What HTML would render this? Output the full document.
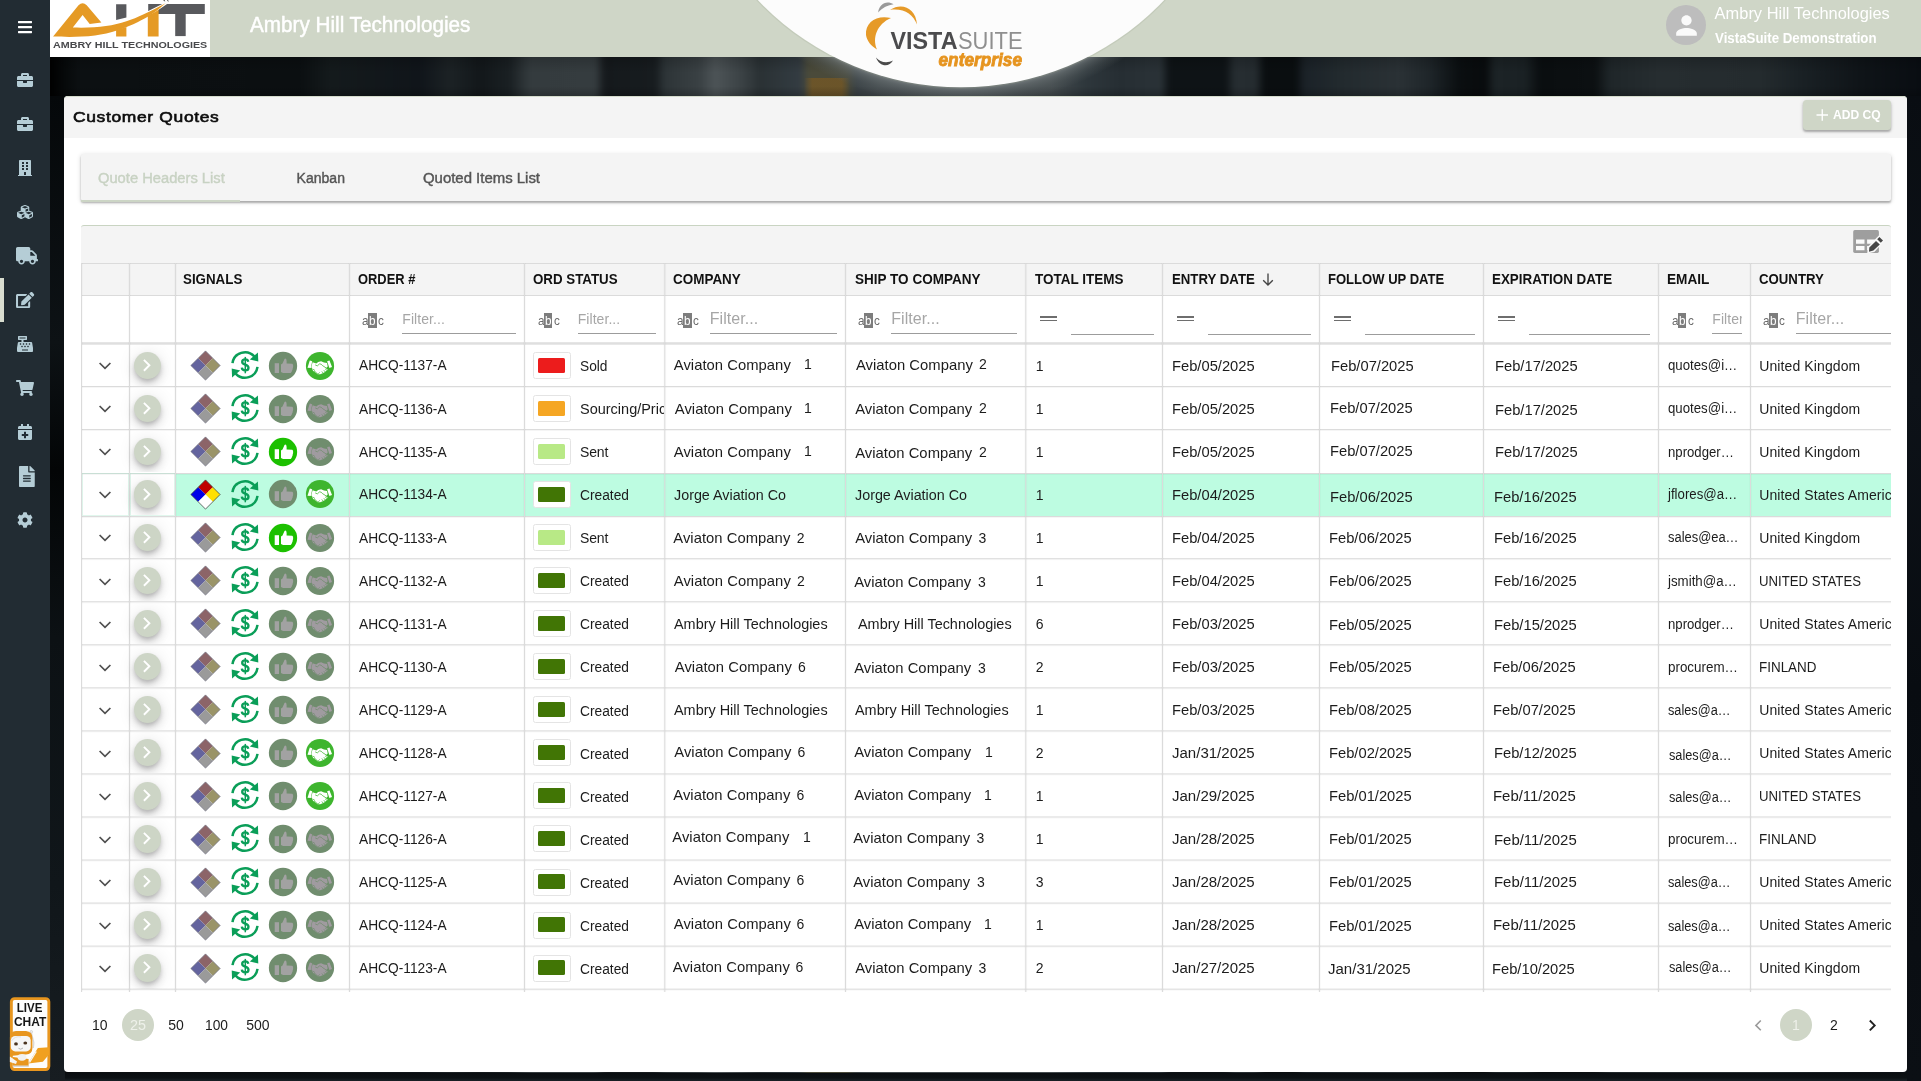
<!DOCTYPE html><html><head><meta charset="utf-8"><title>Customer Quotes</title><style>
*{box-sizing:border-box;margin:0;padding:0}
html,body{width:1921px;height:1081px;overflow:hidden;background:#0b1014}
body{font-family:"Liberation Sans",sans-serif;position:relative;color:#1a1a1a}
.abs{position:absolute}
.t{position:absolute;white-space:nowrap;line-height:1;transform-origin:0 50%}
#bg{left:-10px;top:-10px;width:1941px;height:1101px;filter:blur(2.500px);background:linear-gradient(90deg,#000000 60px,#06090a 75px,#0c1012 90px,#0b0f11 310px,#141a1c 340px,#10151a 430px,#1c2225 460px,#12171a 490px,#1a2023 520px,#343b3e 540px,#353c3f 605px,#15191c 615px,#171c1f 665px,#2d3437 675px,#3a4144 710px,#4d5457 725px,#3c4346 750px,#2a3134 770px,#333c42 810px,#4a4a3a 818px,#4a4a3a 858px,#3a4246 866px,#454c4f 890px,#454c4f 1060px,#2e373c 1095px,#262e33 1130px,#2a3237 1170px,#0e1316 1180px,#0e1316 1235px,#262d31 1245px,#252c30 1265px,#0a0e10 1275px,#0a0e10 1305px,#1b2228 1315px,#222a2e 1350px,#2a3135 1410px,#1e2529 1440px,#0a0e10 1470px,#080b0d 1495px,#1c2326 1505px,#1a2124 1535px,#0a0e10 1550px,#0c1012 1605px,#1f2629 1620px,#262d30 1670px,#242b2e 1770px,#1a2125 1810px,#0f1418 1870px,#090d12 1931px);}
#side{left:0;top:0;width:50px;height:1081px;background:#222c33}
#top{left:50px;top:0;width:1871px;height:57px;background:#cfd6c7}
#logo{left:50px;top:0;width:160px;height:57px;background:#fff}
#card{left:64.300px;top:96px;width:1842.700px;height:976px;background:#fff;border-radius:4px}
#cardhead{left:64.300px;top:96px;width:1842.700px;height:41.500px;background:#f4f4f4;border-radius:4px 4px 0 0;border-top:1.500px solid #d5dccd}
#tabs{left:81px;top:153.500px;width:1810px;height:47.500px;background:#f4f4f4;border-radius:2px;
  box-shadow:0 2px 2px rgba(0,0,0,.26),0 1px 5px rgba(0,0,0,.16)}
.vl{position:absolute;width:1px;background:#dbdbdb;box-shadow:-1px 0 0 rgba(0,0,0,.025),1px 0 0 rgba(0,0,0,.02)}
.hl{position:absolute;height:1px;background:#dbdbdb;box-shadow:0 1px 0 rgba(0,0,0,.04)}
.sw{position:absolute;width:38px;height:27px;background:#fff;border:1px solid #e4e4e4;border-radius:2.500px}
.sw i{position:absolute;left:4.300px;top:4.800px;width:26.700px;height:15px;border-radius:1.500px}
.go{position:absolute;width:27.600px;height:27.600px;border-radius:50%;background:#cdd5c6;box-shadow:0 3px 5px -1px rgba(0,0,0,.2),0 6px 10px 0 rgba(0,0,0,.12),0 1px 18px 0 rgba(0,0,0,.10)}
.circ{position:absolute;width:28.200px;height:28.200px;border-radius:50%}
</style></head><body><div id="root" class="abs" style="left:0;top:0;width:1921px;height:1081px;will-change:transform">
<div id="bg" class="abs"></div>
<div class="abs" style="left:804px;top:78px;width:46px;height:18px;background:linear-gradient(90deg,rgba(150,100,25,0),rgba(140,95,25,.5) 18%,rgba(140,95,25,.5) 82%,rgba(150,100,25,0))"></div>
<div class="abs" style="left:50px;top:57px;width:1871px;height:39px;background:linear-gradient(180deg,rgba(0,0,0,.18),rgba(0,0,0,0) 40%,rgba(0,0,0,0) 75%,rgba(0,0,0,.2))"></div>
<div class="abs" style="left:50px;top:1073px;width:1871px;height:8px;background:linear-gradient(180deg,#0a0e11 0,#0c1114 60%,#1a2126 100%)"></div>
<div class="abs" style="left:50px;top:96px;width:15px;height:985px;background:linear-gradient(180deg,#05080a 0%,#0d1215 25%,#030506 38%,#0c1114 55%,#10161a 80%,#171d21 100%)"></div>
<div class="abs" style="left:1907px;top:96px;width:14px;height:985px;background:linear-gradient(180deg,#090d12 0%,#0d1218 30%,#080c11 60%,#0b0f14 100%)"></div>
<div id="top" class="abs"></div>
<svg class="abs" style="left:661px;top:0" width="600" height="100" viewBox="661 0 600 100"><defs><radialGradient id="dg" gradientUnits="userSpaceOnUse" cx="961" cy="-193" r="300"><stop offset="0.930" stop-color="#848b8d" stop-opacity=".85"/><stop offset="0.948" stop-color="#6c7476" stop-opacity=".6"/><stop offset="0.975" stop-color="#596163" stop-opacity=".3"/><stop offset="1" stop-color="#596163" stop-opacity="0"/></radialGradient><clipPath id="below"><rect x="661" y="57" width="600" height="39"/></clipPath></defs><circle cx="961" cy="-193" r="300" fill="url(#dg)" clip-path="url(#below)"/><circle cx="961" cy="-192.300" r="281" fill="#9aa38f" fill-opacity=".22"/><circle cx="961" cy="-193" r="280.300" fill="#fcfcfc"/></svg>
<div id="logo" class="abs"></div>
<div id="side" class="abs"></div>
<svg class="abs" style="left:50px;top:0" width="160" height="57" viewBox="0 0 160 57">
<path fill="#58595d" d="M66.100 4.200h10.300v13.300l-10.300 2.600z"/>
<path fill="#58595d" d="M98.200 3.900h56.600v10H98.200z"/>
<path fill="#58595d" d="M125.200 13.500h10.500v22.600h-10.500z"/>
<path fill="#e59a25" d="M97.800 36.500h10.800V8L97.800 14.500z"/>
<path fill="#e59a25" d="M66.100 36.500h10.300V27L66.100 30z"/>
<path fill="#fff" d="M22.800 26.600 C45 27.300 62 25.300 76.400 20.300 C88 16.500 98 11.500 117 1.500 L117 4 C100 16 90 20 76.400 25 Z"/>
<path fill="#e59a25" d="M3.100 36.500 L28.500 5.300 Q32.600 1.200 36.700 5.300 L51.400 22.500 L39.700 23.900 L32.600 15 L22.800 27.600 C45 28.300 62 26.300 76.400 21.300 C88 17.500 98 12.500 115.600 3.300 C106 12 98 17 88 22 C76 28 60 33.500 45 35.500 C30 37.300 15 37 3.100 36.500Z"/>
<path fill="#3a3a3a" d="M113 0l2.300 1.800-.7-1.800zM117 0l1.500 2.200-.3-2.200z"/>
<text x="3.100" y="48.200" font-family="Liberation Sans, sans-serif" font-weight="bold" font-size="8.600" fill="#48494c" textLength="154.200" lengthAdjust="spacingAndGlyphs">AMBRY HILL TECHNOLOGIES</text>
</svg>
<div class="t" id="t1" style="left:250.30px;top:14.00px;font-size:21.2px;color:#fff;-webkit-text-stroke:0.45px #fff;transform:scale(0.9764,1);">Ambry Hill Technologies</div>
<div class="t" id="t2" style="left:1714.60px;top:5.00px;font-size:16.4px;color:#fff;letter-spacing:0.027px;">Ambry Hill Technologies</div>
<div class="t" id="t3" style="left:1715.00px;top:32.00px;font-size:13.8px;color:#fff;font-weight:bold;transform:scale(0.9639,1);">VistaSuite Demonstration</div>
<div class="abs" style="left:1666px;top:5px;width:40px;height:40px;border-radius:50%;background:#bdbdbd"></div>
<svg class="abs" style="left:1671px;top:9.700px" width="31" height="31" viewBox="0 0 24 24"><path fill="#fafafa" d="M12 12c2.210 0 4-1.790 4-4s-1.790-4-4-4-4 1.790-4 4 1.790 4 4 4zm0 2c-2.670 0-8 1.340-8 4v2h16v-2c0-2.660-5.330-4-8-4z"/></svg>
<svg class="abs" style="left:860px;top:0" width="170" height="74" viewBox="0 0 170 74">
<path fill="#9a9a9a" d="M18.200 12.600 C18.500 5 26 -0.500 33.600 4.300 C28 5.300 22.500 7.500 18.200 12.600Z"/>
<path fill="#e69a28" d="M30 9.800 C42 2 56 8 57 24.500 C53 14 44 8 30 9.800Z"/>
<path fill="#e69a28" d="M31 18 C17 14.500 5 22 6 35 C7 41 11 46 17 49.500 C12 38 17 24 31 18Z"/>
<path fill="#4a4a4a" d="M16 57.500 C20 62.500 27 63.500 33 60.500 C29 68 19 66.500 16 57.500Z"/>
<text x="30.500" y="49" font-family="Liberation Sans, sans-serif" font-weight="bold" font-size="23.500" fill="#4b4b4d" textLength="67" lengthAdjust="spacingAndGlyphs">VISTA</text>
<text x="98" y="49" font-family="Liberation Sans, sans-serif" font-size="23.500" fill="#8f8f8f" textLength="64.500" lengthAdjust="spacingAndGlyphs">SUITE</text>
<text x="78.500" y="66" font-family="Liberation Sans, sans-serif" font-weight="bold" font-style="italic" font-size="18.500" fill="#e6941f" stroke="#e6941f" stroke-width=".9" textLength="83.500" lengthAdjust="spacingAndGlyphs">enterprise</text>
</svg>
<svg style="position:absolute;left:18.00px;top:19.30px;" width="14.00" height="16.00" viewBox="0 0 448 512"><path fill="#fff" d="M16 132h416c8.837 0 16-7.163 16-16V76c0-8.837-7.163-16-16-16H16C7.163 60 0 67.163 0 76v40c0 8.837 7.163 16 16 16zm0 160h416c8.837 0 16-7.163 16-16v-40c0-8.837-7.163-16-16-16H16c-8.837 0-16 7.163-16 16v40c0 8.837 7.163 16 16 16zm0 160h416c8.837 0 16-7.163 16-16v-40c0-8.837-7.163-16-16-16H16c-8.837 0-16 7.163-16 16v40c0 8.837 7.163 16 16 16z"/></svg>
<svg style="position:absolute;left:17.00px;top:71.80px;" width="16.00" height="16.00" viewBox="0 0 512 512"><path fill="#b5cdd6" d="M320 336c0 8.84-7.16 16-16 16h-96c-8.84 0-16-7.16-16-16v-48H0v144c0 25.6 22.4 48 48 48h416c25.6 0 48-22.4 48-48V288H320v48zm144-208h-80V80c0-25.6-22.4-48-48-48H176c-25.6 0-48 22.4-48 48v48H48c-25.6 0-48 22.4-48 48v80h512v-80c0-25.6-22.4-48-48-48zm-144 0H192V96h128v32z"/></svg>
<svg style="position:absolute;left:17.00px;top:116.00px;" width="16.00" height="16.00" viewBox="0 0 512 512"><path fill="#b5cdd6" d="M320 336c0 8.84-7.16 16-16 16h-96c-8.84 0-16-7.16-16-16v-48H0v144c0 25.6 22.4 48 48 48h416c25.6 0 48-22.4 48-48V288H320v48zm144-208h-80V80c0-25.6-22.4-48-48-48H176c-25.6 0-48 22.4-48 48v48H48c-25.6 0-48 22.4-48 48v80h512v-80c0-25.6-22.4-48-48-48zm-144 0H192V96h128v32z"/></svg>
<svg style="position:absolute;left:18.00px;top:159.70px;" width="14.00" height="16.00" viewBox="0 0 448 512"><path fill="#b5cdd6" d="M436 480h-20V24c0-13.255-10.745-24-24-24H56C42.745 0 32 10.745 32 24v456H12c-6.627 0-12 5.373-12 12v20h448v-20c0-6.627-5.373-12-12-12zM128 76c0-6.627 5.373-12 12-12h40c6.627 0 12 5.373 12 12v40c0 6.627-5.373 12-12 12h-40c-6.627 0-12-5.373-12-12V76zm0 96c0-6.627 5.373-12 12-12h40c6.627 0 12 5.373 12 12v40c0 6.627-5.373 12-12 12h-40c-6.627 0-12-5.373-12-12v-40zm52 148h-40c-6.627 0-12-5.373-12-12v-40c0-6.627 5.373-12 12-12h40c6.627 0 12 5.373 12 12v40c0 6.627-5.373 12-12 12zm76 160h-64v-84c0-6.627 5.373-12 12-12h40c6.627 0 12 5.373 12 12v84zm64-172c0 6.627-5.373 12-12 12h-40c-6.627 0-12-5.373-12-12v-40c0-6.627 5.373-12 12-12h40c6.627 0 12 5.373 12 12v40zm0-96c0 6.627-5.373 12-12 12h-40c-6.627 0-12-5.373-12-12v-40c0-6.627 5.373-12 12-12h40c6.627 0 12 5.373 12 12v40zm0-96c0 6.627-5.373 12-12 12h-40c-6.627 0-12-5.373-12-12V76c0-6.627 5.373-12 12-12h40c6.627 0 12 5.373 12 12v40z"/></svg>
<svg style="position:absolute;left:17.00px;top:204.00px;" width="16.00" height="16.00" viewBox="0 0 512 512"><path fill="#b5cdd6" d="M488.6 250.2L392 214V105.5c0-15-9.3-28.4-23.400-33.700l-100-37.500c-8.100-3.100-17.100-3.100-25.300 0l-100 37.500c-14.100 5.300-23.400 18.700-23.400 33.700V214l-96.600 36.200C9.300 255.500 0 268.900 0 283.900V394c0 13.600 7.700 26.100 19.900 32.200l100 50c10.100 5.100 22.100 5.100 32.200 0l103.900-52 103.900 52c10.100 5.100 22.100 5.100 32.200 0l100-50c12.200-6.100 19.900-18.600 19.900-32.200V283.900c0-15-9.300-28.400-23.400-33.700zM358 214.800l-85 31.900v-68.200l85-37v73.300zM154 104.100l102-38.200 102 38.200v.6l-102 41.400-102-41.400v-.6zm84 291.100l-85 42.500v-79.100l85-38.800v75.400zm0-112l-102 41.400-102-41.400v-.6l102-38.200 102 38.200v.6zm240 112l-85 42.500v-79.100l85-38.800v75.400zm0-112l-102 41.400-102-41.400v-.6l102-38.200 102 38.200v.6z"/></svg>
<svg style="position:absolute;left:16.00px;top:247.00px;" width="22.00" height="17.60" viewBox="0 0 640 512"><path fill="#b5cdd6" d="M624 352h-16V243.9c0-12.700-5.100-24.900-14.100-33.900L494 110.100c-9-9-21.200-14.100-33.900-14.100H416V48c0-26.500-21.500-48-48-48H48C21.500 0 0 21.500 0 48v320c0 26.500 21.500 48 48 48h16c0 53 43 96 96 96s96-43 96-96h128c0 53 43 96 96 96s96-43 96-96h48c8.800 0 16-7.200 16-16v-32c0-8.800-7.200-16-16-16zM160 464c-26.500 0-48-21.500-48-48s21.500-48 48-48 48 21.500 48 48-21.500 48-48 48zm320 0c-26.500 0-48-21.500-48-48s21.500-48 48-48 48 21.500 48 48-21.500 48-48 48zm80-208H416V144h44.100l99.900 99.900V256z"/></svg>
<svg style="position:absolute;left:16.39px;top:291.90px;" width="18.22" height="16.20" viewBox="0 0 576 512"><path fill="#b5cdd6" d="M402.6 83.2l90.200 90.200c3.800 3.800 3.800 10 0 13.800L274.400 405.600l-92.800 10.300c-12.400 1.400-22.900-9.100-21.500-21.500l10.300-92.800L388.800 83.200c3.800-3.800 10-3.800 13.800 0zm162-22.900l-48.800-48.800c-15.200-15.200-39.900-15.200-55.200 0l-35.400 35.400c-3.800 3.800-3.800 10 0 13.800l90.200 90.200c3.800 3.800 10 3.800 13.800 0l35.400-35.400c15.200-15.300 15.200-40 0-55.200zM384 346.200V448H64V128h229.800c3.200 0 6.200-1.300 8.500-3.500l40-40c7.600-7.600 2.200-20.500-8.500-20.500H48C21.500 64 0 85.500 0 112v352c0 26.500 21.500 48 48 48h352c26.500 0 48-21.500 48-48V306.200c0-10.700-12.900-16-20.500-8.500l-40 40c-2.200 2.300-3.500 5.300-3.500 8.500z"/></svg>
<svg style="position:absolute;left:17.00px;top:336.00px;" width="16.00" height="16.00" viewBox="0 0 512 512"><path fill="#b5cdd6" d="M511.1 378.8l-26.700-160c-2.600-15.400-15.900-26.700-31.600-26.700H208v-64h96c8.800 0 16-7.200 16-16V16c0-8.800-7.200-16-16-16H48c-8.800 0-16 7.200-16 16v96c0 8.800 7.200 16 16 16h96v64H59.100c-15.600 0-29 11.300-31.600 26.700L.8 378.700c-.6 3.500-.9 7-.9 10.500V480c0 17.700 14.300 32 32 32h448c17.700 0 32-14.300 32-32v-90.700c.1-3.500-.2-7-.8-10.500zM280 248c0-8.800 7.200-16 16-16h16c8.800 0 16 7.200 16 16v16c0 8.800-7.200 16-16 16h-16c-8.800 0-16-7.200-16-16v-16zm-32 64h16c8.800 0 16 7.200 16 16v16c0 8.800-7.200 16-16 16h-16c-8.800 0-16-7.200-16-16v-16c0-8.800 7.200-16 16-16zm-32-80c8.800 0 16 7.200 16 16v16c0 8.800-7.200 16-16 16h-16c-8.800 0-16-7.200-16-16v-16c0-8.800 7.200-16 16-16h16zM80 80V48h192v32H80zm40 200h-16c-8.800 0-16-7.200-16-16v-16c0-8.800 7.200-16 16-16h16c8.800 0 16 7.200 16 16v16c0 8.800-7.200 16-16 16zm16 64v-16c0-8.800 7.200-16 16-16h16c8.800 0 16 7.200 16 16v16c0 8.800-7.200 16-16 16h-16c-8.800 0-16-7.200-16-16zm216 112c0 4.400-3.600 8-8 8H168c-4.400 0-8-3.600-8-8v-16c0-4.400 3.600-8 8-8h176c4.400 0 8 3.600 8 8v16zm24-112c0 8.800-7.200 16-16 16h-16c-8.800 0-16-7.200-16-16v-16c0-8.800 7.200-16 16-16h16c8.800 0 16 7.200 16 16v16zm48-80c0 8.800-7.200 16-16 16h-16c-8.800 0-16-7.200-16-16v-16c0-8.800 7.200-16 16-16h16c8.800 0 16 7.200 16 16v16z"/></svg>
<svg style="position:absolute;left:16.00px;top:380.00px;" width="18.00" height="16.00" viewBox="0 0 576 512"><path fill="#b5cdd6" d="M528.12 301.319l47.273-208C578.806 78.301 567.391 64 551.99 64H159.208l-9.166-44.81C147.758 8.021 137.93 0 126.529 0H24C10.745 0 0 10.745 0 24v16c0 13.255 10.745 24 24 24h69.883l70.248 343.435C147.325 417.1 136 435.222 136 456c0 30.928 25.072 56 56 56s56-25.072 56-56c0-15.674-6.447-29.835-16.824-40h209.647C430.447 426.165 424 440.326 424 456c0 30.928 25.072 56 56 56s56-25.072 56-56c0-22.172-12.888-41.332-31.579-50.405l5.517-24.276c3.413-15.018-8.002-29.319-23.403-29.319H218.117l-6.545-32h293.145c11.206 0 20.92-7.754 23.403-18.681z"/></svg>
<svg style="position:absolute;left:18.00px;top:424.00px;" width="14.00" height="16.00" viewBox="0 0 448 512"><path fill="#b5cdd6" d="M436 160H12c-6.600 0-12-5.400-12-12v-36c0-26.500 21.500-48 48-48h48V12c0-6.600 5.400-12 12-12h40c6.600 0 12 5.400 12 12v52h128V12c0-6.600 5.400-12 12-12h40c6.600 0 12 5.400 12 12v52h48c26.500 0 48 21.500 48 48v36c0 6.600-5.400 12-12 12zM12 192h424c6.600 0 12 5.400 12 12v260c0 26.500-21.500 48-48 48H48c-26.500 0-48-21.500-48-48V204c0-6.600 5.400-12 12-12zm316 140c0-6.600-5.400-12-12-12h-60v-60c0-6.600-5.400-12-12-12h-40c-6.600 0-12 5.400-12 12v60h-60c-6.600 0-12 5.400-12 12v40c0 6.600 5.400 12 12 12h60v60c0 6.600 5.400 12 12 12h40c6.600 0 12-5.400 12-12v-60h60c6.600 0 12-5.400 12-12v-40z"/></svg>
<svg style="position:absolute;left:19.12px;top:465.70px;" width="15.75" height="21.00" viewBox="0 0 384 512"><path fill="#b5cdd6" d="M224 136V0H24C10.700 0 0 10.700 0 24v464c0 13.300 10.700 24 24 24h336c13.300 0 24-10.700 24-24V160H248c-13.200 0-24-10.800-24-24zm64 236c0 6.600-5.400 12-12 12H108c-6.600 0-12-5.400-12-12v-8c0-6.600 5.400-12 12-12h168c6.600 0 12 5.400 12 12v8zm0-64c0 6.600-5.400 12-12 12H108c-6.600 0-12-5.400-12-12v-8c0-6.600 5.400-12 12-12h168c6.600 0 12 5.400 12 12v8zm0-72v8c0 6.600-5.400 12-12 12H108c-6.600 0-12-5.400-12-12v-8c0-6.600 5.400-12 12-12h168c6.600 0 12 5.400 12 12zm96-114.100v6.100H256V0h6.100c6.400 0 12.500 2.500 17 7l97.900 98c4.500 4.500 7 10.600 7 16.900z"/></svg>
<svg style="position:absolute;left:16.80px;top:512.00px;" width="16.00" height="16.00" viewBox="0 0 512 512"><path fill="#b5cdd6" d="M487.4 315.7l-42.600-24.600c4.300-23.200 4.300-47 0-70.200l42.600-24.600c4.900-2.800 7.100-8.600 5.500-14-11.100-35.600-30-67.800-54.700-94.600-3.800-4.100-10-5.100-14.800-2.300L380.800 110c-17.900-15.400-38.500-27.300-60.800-35.100V25.800c0-5.600-3.900-10.500-9.400-11.700-36.700-8.200-74.300-7.800-109.200 0-5.500 1.200-9.400 6.100-9.400 11.700V75c-22.200 7.900-42.800 19.800-60.800 35.100L88.700 85.500c-4.900-2.800-11-1.900-14.800 2.300-24.700 26.700-43.600 58.900-54.700 94.600-1.700 5.400.6 11.200 5.500 14L67.300 221c-4.300 23.200-4.300 47 0 70.200l-42.600 24.600c-4.900 2.800-7.100 8.600-5.500 14 11.100 35.600 30 67.800 54.700 94.600 3.800 4.100 10 5.100 14.800 2.300l42.600-24.600c17.900 15.400 38.500 27.300 60.800 35.100v49.200c0 5.600 3.900 10.500 9.400 11.700 36.700 8.200 74.300 7.800 109.200 0 5.500-1.200 9.400-6.100 9.400-11.700v-49.200c22.200-7.900 42.800-19.800 60.800-35.100l42.600 24.600c4.900 2.800 11 1.900 14.800-2.300 24.700-26.700 43.600-58.900 54.700-94.600 1.500-5.500-.7-11.300-5.600-14.100zM256 336c-44.100 0-80-35.900-80-80s35.900-80 80-80 80 35.900 80 80-35.900 80-80 80z"/></svg>
<div class="abs" style="left:0;top:278px;width:3.600px;height:44px;background:#d9ddd0"></div>
<svg class="abs" style="left:9px;top:996px" width="43" height="77" viewBox="0 0 43 77">
<rect x="2.350" y="2.650" width="37.500" height="70.900" rx="3.200" fill="#fdfdfd" stroke="#e8961f" stroke-width="2.900"/>
<path d="M3.800 61 L19.600 63 L19.600 70 L3.800 70Z" fill="#e8961f"/>
<path d="M19.200 67.600 L28.900 52.100 L40 51.300 L40 58.500 L33.900 65.700Z" fill="#f0a020"/>
<path d="M20.500 66.500 L27.300 55.500" stroke="#f6f6f6" stroke-width="1.300"/>
<path d="M22.300 36.500 L24.800 46.500 L24.300 52" fill="none" stroke="#d9d9d9" stroke-width="1.300"/>
<circle cx="22.300" cy="35.800" r="1.300" fill="#eee" stroke="#bbb" stroke-width=".5"/>
<path d="M.9 41.500 Q.9 35.500 7 35 L17 35 Q23.400 35.500 23.400 42 L23.400 52 Q23.400 58 17 58.500 L.9 60Z" fill="#e8961f"/>
<rect x="1.800" y="39.900" width="19.900" height="15.500" rx="4.500" fill="#f6f6f6"/>
<path d="M2.500 45 Q6 39.500 12 41" fill="none" stroke="#e0e0e0" stroke-width="1"/>
<ellipse cx="7" cy="47.900" rx="1.900" ry="1.600" fill="#4a3420"/><ellipse cx="16.300" cy="47" rx="1.900" ry="1.600" fill="#4a3420"/>
<path d="M9.500 52.300 Q11.700 54.200 14 52" fill="none" stroke="#b5b5b5" stroke-width="1"/>
<ellipse cx="13" cy="61.300" rx="4.400" ry="3.400" fill="#f2f2f2"/>
<path d="M.9 60.500 L8 65.500 L7 68 L.9 66Z" fill="#f4f4f4"/>
<path d="M3.800 69.500 h16 v1.500 h-16z" fill="#d9d9d9"/>
<text x="7.800" y="16.300" font-family="Liberation Sans, sans-serif" font-weight="bold" font-size="13" fill="#151515" textLength="25.700" lengthAdjust="spacingAndGlyphs">LIVE</text>
<text x="4.900" y="30.400" font-family="Liberation Sans, sans-serif" font-weight="bold" font-size="13" fill="#151515" textLength="32.400" lengthAdjust="spacingAndGlyphs">CHAT</text>
</svg>
<div id="card" class="abs"></div><div id="cardhead" class="abs"></div>
<div class="t" id="t4" style="left:73.10px;top:110.00px;font-size:14.7px;color:#0d0d0d;-webkit-text-stroke:0.6px #0d0d0d;transform:scale(1.1876,1.05);letter-spacing:.55px;">Customer Quotes</div>
<div class="abs" style="left:1803px;top:100px;width:87.700px;height:30.200px;background:#cfd6c7;border-radius:3.500px;box-shadow:0 2px 2px rgba(0,0,0,.24),0 1px 4px rgba(0,0,0,.14)"></div>
<svg class="abs" style="left:1815px;top:108px" width="14" height="14" viewBox="0 0 14 14"><path d="M7.250 1.200v11.600M1.500 7h11.500" stroke="#fff" stroke-width="1.350" fill="none"/></svg>
<div class="t" id="t5" style="left:1832.50px;top:108.00px;font-size:13px;color:#fff;font-weight:bold;transform:scale(0.9302,1);">ADD CQ</div>
<div id="tabs" class="abs"></div>
<div class="abs" style="left:81px;top:199.800px;width:159px;height:1.800px;background:#ccd5c5"></div>
<div class="t" id="t6" style="left:97.50px;top:171.00px;font-size:14px;color:#c8d2c3;-webkit-text-stroke:0.4px #c8d2c3;transform:scale(1.0508,1);">Quote Headers List</div>
<div class="t" id="t7" style="left:296.50px;top:171.00px;font-size:14px;color:#555;-webkit-text-stroke:0.4px #555;letter-spacing:0.044px;">Kanban</div>
<div class="t" id="t8" style="left:422.50px;top:171.00px;font-size:14px;color:#555;-webkit-text-stroke:0.4px #555;transform:scale(1.0664,1);">Quoted Items List</div>
<div class="abs" id="grid" style="left:81px;top:225px;width:1810px;height:767px;overflow:hidden">
<div class="abs" style="left:0;top:0;width:1810px;height:70px;background:#f4f4f4;border-top:1.500px solid #c9d4c2;border-radius:3px 3px 0 0"></div>
<div class="abs" style="left:94px;top:249px;width:1716px;height:42px;background:#bdfce1"></div>
<svg class="abs" style="left:0;top:0" width="1810" height="767" viewBox="81 225 1810 767"><rect x="81" y="263" width="1810" height="1" fill="#dbdbdb"/><rect x="81" y="295" width="1810" height="1" fill="#dbdbdb"/><rect x="81" y="342.200" width="1810" height="2.500" fill="#dfdfdf"/><rect x="81" y="386.00" width="1810" height="1" fill="#dbdbdb"/><rect x="81" y="387.00" width="1810" height="1" fill="#000" fill-opacity=".035"/><rect x="81" y="429.05" width="1810" height="1" fill="#dbdbdb"/><rect x="81" y="430.05" width="1810" height="1" fill="#000" fill-opacity=".035"/><rect x="81" y="473.00" width="1810" height="1" fill="#dbdbdb"/><rect x="81" y="474.00" width="1810" height="1" fill="#000" fill-opacity=".035"/><rect x="81" y="516.00" width="1810" height="1" fill="#dbdbdb"/><rect x="81" y="517.00" width="1810" height="1" fill="#000" fill-opacity=".035"/><rect x="81" y="558.18" width="1810" height="1" fill="#dbdbdb"/><rect x="81" y="559.18" width="1810" height="1" fill="#000" fill-opacity=".035"/><rect x="81" y="601.23" width="1810" height="1" fill="#dbdbdb"/><rect x="81" y="602.23" width="1810" height="1" fill="#000" fill-opacity=".035"/><rect x="81" y="644.27" width="1810" height="1" fill="#dbdbdb"/><rect x="81" y="645.27" width="1810" height="1" fill="#000" fill-opacity=".035"/><rect x="81" y="687.32" width="1810" height="1" fill="#dbdbdb"/><rect x="81" y="688.32" width="1810" height="1" fill="#000" fill-opacity=".035"/><rect x="81" y="730.36" width="1810" height="1" fill="#dbdbdb"/><rect x="81" y="731.36" width="1810" height="1" fill="#000" fill-opacity=".035"/><rect x="81" y="773.40" width="1810" height="1" fill="#dbdbdb"/><rect x="81" y="774.40" width="1810" height="1" fill="#000" fill-opacity=".035"/><rect x="81" y="816.45" width="1810" height="1" fill="#dbdbdb"/><rect x="81" y="817.45" width="1810" height="1" fill="#000" fill-opacity=".035"/><rect x="81" y="859.50" width="1810" height="1" fill="#dbdbdb"/><rect x="81" y="860.50" width="1810" height="1" fill="#000" fill-opacity=".035"/><rect x="81" y="902.54" width="1810" height="1" fill="#dbdbdb"/><rect x="81" y="903.54" width="1810" height="1" fill="#000" fill-opacity=".035"/><rect x="81" y="945.59" width="1810" height="1" fill="#dbdbdb"/><rect x="81" y="946.59" width="1810" height="1" fill="#000" fill-opacity=".035"/><rect x="81" y="988.63" width="1810" height="1" fill="#dbdbdb"/><rect x="81" y="989.63" width="1810" height="1" fill="#000" fill-opacity=".035"/><rect x="81" y="263" width="1" height="729" fill="#dbdbdb"/><rect x="80" y="263" width="1" height="729" fill="#000" fill-opacity=".02"/><rect x="82" y="263" width="1" height="729" fill="#000" fill-opacity=".02"/><rect x="129" y="263" width="1" height="729" fill="#dbdbdb"/><rect x="128" y="263" width="1" height="729" fill="#000" fill-opacity=".02"/><rect x="130" y="263" width="1" height="729" fill="#000" fill-opacity=".02"/><rect x="175" y="263" width="1" height="729" fill="#dbdbdb"/><rect x="174" y="263" width="1" height="729" fill="#000" fill-opacity=".02"/><rect x="176" y="263" width="1" height="729" fill="#000" fill-opacity=".02"/><rect x="349" y="263" width="1" height="729" fill="#dbdbdb"/><rect x="348" y="263" width="1" height="729" fill="#000" fill-opacity=".02"/><rect x="350" y="263" width="1" height="729" fill="#000" fill-opacity=".02"/><rect x="524" y="263" width="1" height="729" fill="#dbdbdb"/><rect x="523" y="263" width="1" height="729" fill="#000" fill-opacity=".02"/><rect x="525" y="263" width="1" height="729" fill="#000" fill-opacity=".02"/><rect x="664.3" y="263" width="1" height="729" fill="#dbdbdb"/><rect x="663.3" y="263" width="1" height="729" fill="#000" fill-opacity=".02"/><rect x="665.3" y="263" width="1" height="729" fill="#000" fill-opacity=".02"/><rect x="845" y="263" width="1" height="729" fill="#dbdbdb"/><rect x="844" y="263" width="1" height="729" fill="#000" fill-opacity=".02"/><rect x="846" y="263" width="1" height="729" fill="#000" fill-opacity=".02"/><rect x="1025.3" y="263" width="1" height="729" fill="#dbdbdb"/><rect x="1024.3" y="263" width="1" height="729" fill="#000" fill-opacity=".02"/><rect x="1026.3" y="263" width="1" height="729" fill="#000" fill-opacity=".02"/><rect x="1162" y="263" width="1" height="729" fill="#dbdbdb"/><rect x="1161" y="263" width="1" height="729" fill="#000" fill-opacity=".02"/><rect x="1163" y="263" width="1" height="729" fill="#000" fill-opacity=".02"/><rect x="1319" y="263" width="1" height="729" fill="#dbdbdb"/><rect x="1318" y="263" width="1" height="729" fill="#000" fill-opacity=".02"/><rect x="1320" y="263" width="1" height="729" fill="#000" fill-opacity=".02"/><rect x="1483" y="263" width="1" height="729" fill="#dbdbdb"/><rect x="1482" y="263" width="1" height="729" fill="#000" fill-opacity=".02"/><rect x="1484" y="263" width="1" height="729" fill="#000" fill-opacity=".02"/><rect x="1658" y="263" width="1" height="729" fill="#dbdbdb"/><rect x="1657" y="263" width="1" height="729" fill="#000" fill-opacity=".02"/><rect x="1659" y="263" width="1" height="729" fill="#000" fill-opacity=".02"/><rect x="1750" y="263" width="1" height="729" fill="#dbdbdb"/><rect x="1749" y="263" width="1" height="729" fill="#000" fill-opacity=".02"/><rect x="1751" y="263" width="1" height="729" fill="#000" fill-opacity=".02"/><rect x="82.5" y="473.500" width="46" height="42" fill="none" stroke="#a9e8cc" stroke-opacity=".35" stroke-width="1"/><rect x="130.5" y="473.500" width="44" height="42" fill="none" stroke="#a9e8cc" stroke-opacity=".35" stroke-width="1"/></svg>
<svg class="abs" style="left:1771px;top:4px" width="36" height="28" viewBox="0 0 36 28">
<rect x="1.200" y="1.100" width="25.700" height="22.800" rx="1.600" fill="#9e9e9e"/>
<path fill="#fafafa" d="M4 10.400h8.500v4.300H4zM4 17h8.500v4.200H4zM15.100 10.400h9v4.300h-9zM15.100 17h9v4.200h-9z"/>
<path fill="#f8f8f8" d="M15.200 24.600 L16 17.800 L26.900 6.400 L32.700 11.700 L22.300 22.900Z"/>
<path fill="#474747" d="M17 22.700 L17.300 18.600 L24 12.100 L27.800 15.500 L21.400 21.500Z"/>
<path fill="#474747" d="M25.200 10.200 L27.400 8 L31 11.600 L28.800 13.800Z"/>
</svg>
<div class="t" id="t9" style="left:101.80px;top:47.00px;font-size:14px;color:#111;font-weight:bold;transform:scale(0.9528,1);">SIGNALS</div>
<div class="t" id="t10" style="left:277.30px;top:47.00px;font-size:14px;color:#111;font-weight:bold;transform:scale(0.9207,1);">ORDER #</div>
<div class="t" id="t11" style="left:452.05px;top:47.00px;font-size:14px;color:#111;font-weight:bold;transform:scale(0.9508,1);">ORD STATUS</div>
<div class="t" id="t12" style="left:592.30px;top:47.00px;font-size:14px;color:#111;font-weight:bold;transform:scale(0.9613,1);">COMPANY</div>
<div class="t" id="t13" style="left:773.55px;top:47.00px;font-size:14px;color:#111;font-weight:bold;transform:scale(0.9663,1);">SHIP TO COMPANY</div>
<div class="t" id="t14" style="left:954.00px;top:47.00px;font-size:14px;color:#111;font-weight:bold;transform:scale(0.9632,1);">TOTAL ITEMS</div>
<div class="t" id="t15" style="left:1090.60px;top:47.00px;font-size:14px;color:#111;font-weight:bold;transform:scale(0.9448,1);">ENTRY DATE</div>
<div class="t" id="t16" style="left:1246.60px;top:47.00px;font-size:14px;color:#111;font-weight:bold;transform:scale(0.9318,1);">FOLLOW UP DATE</div>
<div class="t" id="t17" style="left:1411.00px;top:47.00px;font-size:14px;color:#111;font-weight:bold;transform:scale(0.9570,1);">EXPIRATION DATE</div>
<div class="t" id="t18" style="left:1586.00px;top:47.00px;font-size:14px;color:#111;font-weight:bold;transform:scale(0.9733,1);">EMAIL</div>
<div class="t" id="t19" style="left:1677.60px;top:47.00px;font-size:14px;color:#111;font-weight:bold;transform:scale(0.9432,1);">COUNTRY</div>
<svg class="abs" style="left:1180px;top:47px" width="14" height="15" viewBox="0 0 14 15"><path d="M7 1.500v11M2.200 8.200l4.800 4.800 4.800-4.800" fill="none" stroke="#444" stroke-width="1.350"/></svg>
<div class="t" id="t20" style="left:281.00px;top:89.00px;font-size:13px;color:#6a6a6a;transform:scaleX(.9);">a</div>
<div class="abs" style="left:287.0px;top:88.0px;width:8.700px;height:14.700px;background:#7d7d7d"></div>
<div class="t" id="t21" style="left:288.30px;top:89.00px;font-size:13px;color:#fff;transform:scaleX(.9);">b</div>
<div class="t" id="t22" style="left:297.20px;top:89.00px;font-size:13px;color:#6a6a6a;transform:scaleX(.9);">c</div>
<div class="t" id="t23" style="left:321.30px;top:87.00px;font-size:14px;color:#a6a6a6;letter-spacing:0.061px;">Filter...</div>
<div class="abs" style="left:321px;top:107.69999999999999px;width:114px;height:1.300px;background:#9c9c9c"></div>
<div class="t" id="t24" style="left:456.50px;top:89.00px;font-size:13px;color:#6a6a6a;transform:scaleX(.9);">a</div>
<div class="abs" style="left:462.5px;top:88.0px;width:8.700px;height:14.700px;background:#7d7d7d"></div>
<div class="t" id="t25" style="left:463.80px;top:89.00px;font-size:13px;color:#fff;transform:scaleX(.9);">b</div>
<div class="t" id="t26" style="left:472.70px;top:89.00px;font-size:13px;color:#6a6a6a;transform:scaleX(.9);">c</div>
<div class="t" id="t27" style="left:496.70px;top:87.00px;font-size:14px;color:#a6a6a6;letter-spacing:0.061px;">Filter...</div>
<div class="abs" style="left:496.5px;top:107.69999999999999px;width:78.5px;height:1.300px;background:#9c9c9c"></div>
<div class="t" id="t28" style="left:596.00px;top:89.00px;font-size:13px;color:#6a6a6a;transform:scaleX(.9);">a</div>
<div class="abs" style="left:602.0px;top:88.0px;width:8.700px;height:14.700px;background:#7d7d7d"></div>
<div class="t" id="t29" style="left:603.30px;top:89.00px;font-size:13px;color:#fff;transform:scaleX(.9);">b</div>
<div class="t" id="t30" style="left:612.20px;top:89.00px;font-size:13px;color:#6a6a6a;transform:scaleX(.9);">c</div>
<div class="t" id="t31" style="left:628.70px;top:86.00px;font-size:16px;color:#a6a6a6;letter-spacing:0.061px;">Filter...</div>
<div class="abs" style="left:628.5px;top:107.69999999999999px;width:127.5px;height:1.300px;background:#9c9c9c"></div>
<div class="t" id="t32" style="left:777.00px;top:89.00px;font-size:13px;color:#6a6a6a;transform:scaleX(.9);">a</div>
<div class="abs" style="left:783.0px;top:88.0px;width:8.700px;height:14.700px;background:#7d7d7d"></div>
<div class="t" id="t33" style="left:784.30px;top:89.00px;font-size:13px;color:#fff;transform:scaleX(.9);">b</div>
<div class="t" id="t34" style="left:793.20px;top:89.00px;font-size:13px;color:#6a6a6a;transform:scaleX(.9);">c</div>
<div class="t" id="t35" style="left:810.20px;top:86.00px;font-size:16px;color:#a6a6a6;letter-spacing:0.061px;">Filter...</div>
<div class="abs" style="left:810px;top:107.69999999999999px;width:126px;height:1.300px;background:#9c9c9c"></div>
<div class="abs" style="left:959px;top:91.10000000000002px;width:17px;height:1.700px;background:#6e6e6e"></div><div class="abs" style="left:959px;top:94.80000000000001px;width:17px;height:1.700px;background:#6e6e6e"></div>
<div class="abs" style="left:990px;top:108.69999999999999px;width:83px;height:1.300px;background:#9c9c9c"></div>
<div class="abs" style="left:1096px;top:91.10000000000002px;width:17px;height:1.700px;background:#6e6e6e"></div><div class="abs" style="left:1096px;top:94.80000000000001px;width:17px;height:1.700px;background:#6e6e6e"></div>
<div class="abs" style="left:1127px;top:108.69999999999999px;width:103px;height:1.300px;background:#9c9c9c"></div>
<div class="abs" style="left:1253px;top:91.10000000000002px;width:17px;height:1.700px;background:#6e6e6e"></div><div class="abs" style="left:1253px;top:94.80000000000001px;width:17px;height:1.700px;background:#6e6e6e"></div>
<div class="abs" style="left:1283.5px;top:108.69999999999999px;width:110.5px;height:1.300px;background:#9c9c9c"></div>
<div class="abs" style="left:1417px;top:91.10000000000002px;width:17px;height:1.700px;background:#6e6e6e"></div><div class="abs" style="left:1417px;top:94.80000000000001px;width:17px;height:1.700px;background:#6e6e6e"></div>
<div class="abs" style="left:1447.5px;top:108.69999999999999px;width:121.5px;height:1.300px;background:#9c9c9c"></div>
<div class="t" id="t36" style="left:1590.50px;top:89.00px;font-size:13px;color:#6a6a6a;transform:scaleX(.9);">a</div>
<div class="abs" style="left:1596.5px;top:88.0px;width:8.700px;height:14.700px;background:#7d7d7d"></div>
<div class="t" id="t37" style="left:1597.80px;top:89.00px;font-size:13px;color:#fff;transform:scaleX(.9);">b</div>
<div class="t" id="t38" style="left:1606.70px;top:89.00px;font-size:13px;color:#6a6a6a;transform:scaleX(.9);">c</div>
<div class="abs" style="left:1631px;top:80px;width:29.500px;height:26px;overflow:hidden">
<div class="t" id="t39" style="left:0.30px;top:7.00px;font-size:14px;color:#a6a6a6;letter-spacing:0.061px;">Filter...</div>
</div>
<div class="abs" style="left:1631px;top:107.69999999999999px;width:29.5px;height:1.300px;background:#9c9c9c"></div>
<div class="t" id="t40" style="left:1682.00px;top:89.00px;font-size:13px;color:#6a6a6a;transform:scaleX(.9);">a</div>
<div class="abs" style="left:1688.0px;top:88.0px;width:8.700px;height:14.700px;background:#7d7d7d"></div>
<div class="t" id="t41" style="left:1689.30px;top:89.00px;font-size:13px;color:#fff;transform:scaleX(.9);">b</div>
<div class="t" id="t42" style="left:1698.20px;top:89.00px;font-size:13px;color:#6a6a6a;transform:scaleX(.9);">c</div>
<div class="t" id="t43" style="left:1714.70px;top:86.00px;font-size:16px;color:#a6a6a6;letter-spacing:0.061px;">Filter...</div>
<div class="abs" style="left:1714.5px;top:107.69999999999999px;width:95.5px;height:1.300px;background:#9c9c9c"></div>
<svg class="abs" style="left:17.400000000000006px;top:136.3px" width="14" height="10" viewBox="0 0 14 10"><path d="M1.600 2l5.400 5.400 5.400-5.400" fill="none" stroke="#505050" stroke-width="1.700"/></svg>
<div class="abs" style="left:1px;top:120.0px;width:93px;height:41px;overflow:hidden"><div class="go" style="left:51.599999999999994px;top:6.5px"></div></div>
<svg class="abs" style="left:61px;top:133.7px" width="10" height="13" viewBox="0 0 10 13"><path d="M1.900 .9l5.500 5.400-5.500 5.400" fill="none" stroke="#fff" stroke-width="1.900"/></svg>
<svg class="abs" style="left:109.30px;top:125.10px" width="31" height="31" viewBox="-15.500 -15.500 31 31"><path d="M0 -14.6 L7.3 -7.3 L0 0 L-7.3 -7.3Z" fill="#8c6468"/><path d="M-14.6 0 L-7.3 -7.3 L0 0 L-7.3 7.3Z" fill="#64649e"/><path d="M14.6 0 L7.3 -7.3 L0 0 L7.3 7.3Z" fill="#9a9468"/><path d="M0 14.6 L7.3 7.3 L0 0 L-7.3 7.3Z" fill="#9a9a9a"/><path d="M0 -14.6 L14.6 0 L0 14.6 L-14.6 0Z" fill="none" stroke="#68687a" stroke-width=".7"/></svg>
<svg class="abs" style="left:147.90px;top:123.80px" width="32" height="32" viewBox="-16 -16 32 32"><path d="M-12.500 -1.800 A12.600 12.600 0 0 1 9.300 -8.600" fill="none" stroke="#0a9e58" stroke-width="2.500"/><path d="M12.500 1.800 A12.600 12.600 0 0 1 -9.300 8.600" fill="none" stroke="#0a9e58" stroke-width="2.500"/><path d="M12.900 -12.400 L13.300 -3.600 L4.800 -5.400Z" fill="#0a9e58"/><path d="M-12.900 12.400 L-13.300 3.600 L-4.800 5.400Z" fill="#0a9e58"/><path d="M.3 -8.100v16.400" stroke="#0a9e58" stroke-width="1.500"/><path d="M3.300 -3.200 C3 -5.100 1.800 -5.600 .2 -5.600 C-1.700 -5.600 -2.800 -4.600 -2.800 -3.100 C-2.800 .2 3.500 -.9 3.500 2.700 C3.500 4.500 2.100 5.400 .2 5.400 C-1.900 5.400 -3 4.400 -3.200 2.600" fill="none" stroke="#0a9e58" stroke-width="2.300"/></svg>
<svg class="abs" style="left:187.05px;top:125.60px" width="30" height="30" viewBox="-15 -15 30 30"><circle r="14.150" fill="#708d6e"/><path fill="#a2a2a2" d="M-8.300 -2.800h4.300v9.800h-4.300z"/><path fill="#a2a2a2" d="M-2 -1.450 L-.5 -2.600 L1.500 -6.900 Q2.300 -7.800 3.200 -7 Q3.900 -5 3.600 -2.600 L9.300 -2.300 Q10.400 -1.300 10.100 -.2 Q10.300 1.200 9.700 2.400 Q9.700 3.800 9 4.800 Q8.800 6.300 7.700 7.050 L0 7.050 L-2 6Z"/></svg>
<svg class="abs" style="left:223.95px;top:125.50px" width="30" height="30" viewBox="-15 -15 30 30"><circle r="14.100" fill="#3eb52e"/><path fill="#ffffff" d="M-12.500 1.800 L-10.200 -5.500 L-7.800 -4.700 L-9.200 2.100Z"/><path fill="#ffffff" d="M7.100 -4.700 L9.500 -5.500 L12 1.100 L9.400 2.100Z"/><path fill="#ffffff" d="M-7.400 -3.700 L-3.700 -2.500 L-1.800 -4 L1.100 -4.700 L4 -3.500 L7 -3.100 L7.700 .5 L6 2.300 L7.800 3.700 L6 5 L5 6.100 L2.750 7.300 L.2 8.250 L-2.400 8.250 L-4.700 6.600 L-7 4.700 L-7.900 2.400 L-8.700 1.300Z"/><path d="M-4.800 -1.100 L-2.700 -.1 L-.5 -2.100 L1.100 -1.800 L2.800 -.2 L6.800 2.300" fill="none" stroke="#3eb52e" stroke-width=".75"/><path d="M-7.300 3l2.300 1.500M-6 5l2.300 1.500M-4.200 6.700l2.200 1.400M-1.900 8l1.700-1.600M3.300 7.400l-1.500-2M5.400 6.200l-1.600-2M7 4.400l-2-1.600" fill="none" stroke="#3eb52e" stroke-width=".7"/></svg>
<div class="t" id="t44" style="left:277.70px;top:133.00px;font-size:14px;color:#1c1c1c;transform:scale(0.9819,1);">AHCQ-1137-A</div>
<div class="sw" style="left:452px;top:127.0px"><i style="background:#ec1c1c"></i></div>
<div class="abs" style="left:498px;top:129.0px;width:85px;height:26px;overflow:hidden">
<div class="t" id="t45" style="left:1.00px;top:5.00px;font-size:14px;color:#1c1c1c;transform:scale(0.9810,1);">Sold</div>
</div>
<div class="t" id="t46" style="left:592.80px;top:133.00px;font-size:14.8px;color:#1c1c1c;letter-spacing:0.033px;">Aviaton Company</div>
<div class="t" id="t47" style="left:723.00px;top:132.00px;font-size:14px;color:#1c1c1c;">1</div>
<div class="t" id="t48" style="left:774.90px;top:133.00px;font-size:14.8px;color:#1c1c1c;letter-spacing:0.033px;">Aviaton Company</div>
<div class="t" id="t49" style="left:898.00px;top:132.00px;font-size:14px;color:#1c1c1c;">2</div>
<div class="t" id="t50" style="left:954.70px;top:134.00px;font-size:14px;color:#1c1c1c;">1</div>
<div class="t" id="t51" style="left:1091.30px;top:134.00px;font-size:14px;color:#1c1c1c;transform:scale(1.0518,1);">Feb/05/2025</div>
<div class="t" id="t52" style="left:1249.50px;top:134.00px;font-size:14px;color:#1c1c1c;transform:scale(1.0518,1);">Feb/07/2025</div>
<div class="t" id="t53" style="left:1413.70px;top:134.00px;font-size:14px;color:#1c1c1c;transform:scale(1.0518,1);">Feb/17/2025</div>
<div class="t" id="t54" style="left:1586.70px;top:133.00px;font-size:14px;color:#1c1c1c;transform:scale(0.9447,1);">quotes@i…</div>
<div class="t" id="t55" style="left:1678.20px;top:134.00px;font-size:14px;color:#1c1c1c;letter-spacing:0.113px;">United Kingdom</div>
<svg class="abs" style="left:17.400000000000006px;top:179.34500000000003px" width="14" height="10" viewBox="0 0 14 10"><path d="M1.600 2l5.400 5.400 5.400-5.400" fill="none" stroke="#505050" stroke-width="1.700"/></svg>
<div class="abs" style="left:1px;top:163.04500000000002px;width:93px;height:41px;overflow:hidden"><div class="go" style="left:51.599999999999994px;top:6.5px"></div></div>
<svg class="abs" style="left:61px;top:176.745px" width="10" height="13" viewBox="0 0 10 13"><path d="M1.900 .9l5.500 5.400-5.500 5.400" fill="none" stroke="#fff" stroke-width="1.900"/></svg>
<svg class="abs" style="left:109.30px;top:168.15px" width="31" height="31" viewBox="-15.500 -15.500 31 31"><path d="M0 -14.6 L7.3 -7.3 L0 0 L-7.3 -7.3Z" fill="#8c6468"/><path d="M-14.6 0 L-7.3 -7.3 L0 0 L-7.3 7.3Z" fill="#64649e"/><path d="M14.6 0 L7.3 -7.3 L0 0 L7.3 7.3Z" fill="#9a9468"/><path d="M0 14.6 L7.3 7.3 L0 0 L-7.3 7.3Z" fill="#9a9a9a"/><path d="M0 -14.6 L14.6 0 L0 14.6 L-14.6 0Z" fill="none" stroke="#68687a" stroke-width=".7"/></svg>
<svg class="abs" style="left:147.90px;top:166.85px" width="32" height="32" viewBox="-16 -16 32 32"><path d="M-12.500 -1.800 A12.600 12.600 0 0 1 9.300 -8.600" fill="none" stroke="#0a9e58" stroke-width="2.500"/><path d="M12.500 1.800 A12.600 12.600 0 0 1 -9.300 8.600" fill="none" stroke="#0a9e58" stroke-width="2.500"/><path d="M12.900 -12.400 L13.300 -3.600 L4.800 -5.400Z" fill="#0a9e58"/><path d="M-12.900 12.400 L-13.300 3.600 L-4.800 5.400Z" fill="#0a9e58"/><path d="M.3 -8.100v16.400" stroke="#0a9e58" stroke-width="1.500"/><path d="M3.300 -3.200 C3 -5.100 1.800 -5.600 .2 -5.600 C-1.700 -5.600 -2.800 -4.600 -2.800 -3.100 C-2.800 .2 3.500 -.9 3.500 2.700 C3.500 4.500 2.100 5.400 .2 5.400 C-1.900 5.400 -3 4.400 -3.200 2.600" fill="none" stroke="#0a9e58" stroke-width="2.300"/></svg>
<svg class="abs" style="left:187.05px;top:168.65px" width="30" height="30" viewBox="-15 -15 30 30"><circle r="14.150" fill="#708d6e"/><path fill="#a2a2a2" d="M-8.300 -2.800h4.300v9.800h-4.300z"/><path fill="#a2a2a2" d="M-2 -1.450 L-.5 -2.600 L1.500 -6.900 Q2.300 -7.800 3.200 -7 Q3.900 -5 3.600 -2.600 L9.300 -2.300 Q10.400 -1.300 10.100 -.2 Q10.300 1.200 9.700 2.400 Q9.700 3.800 9 4.800 Q8.800 6.300 7.700 7.050 L0 7.050 L-2 6Z"/></svg>
<svg class="abs" style="left:223.95px;top:168.55px" width="30" height="30" viewBox="-15 -15 30 30"><circle r="14.100" fill="#708d6e"/><path fill="#a09ba0" d="M-12.500 1.800 L-10.200 -5.500 L-7.800 -4.700 L-9.200 2.100Z"/><path fill="#a09ba0" d="M7.100 -4.700 L9.500 -5.500 L12 1.100 L9.400 2.100Z"/><path fill="#a09ba0" d="M-7.400 -3.700 L-3.700 -2.500 L-1.800 -4 L1.100 -4.700 L4 -3.500 L7 -3.100 L7.700 .5 L6 2.300 L7.800 3.700 L6 5 L5 6.100 L2.750 7.300 L.2 8.250 L-2.400 8.250 L-4.700 6.600 L-7 4.700 L-7.900 2.400 L-8.700 1.300Z"/><path d="M-4.800 -1.100 L-2.700 -.1 L-.5 -2.100 L1.100 -1.800 L2.800 -.2 L6.800 2.300" fill="none" stroke="#708d6e" stroke-width=".75"/><path d="M-7.300 3l2.300 1.500M-6 5l2.300 1.500M-4.200 6.700l2.200 1.400M-1.900 8l1.700-1.600M3.300 7.400l-1.500-2M5.400 6.200l-1.600-2M7 4.400l-2-1.600" fill="none" stroke="#708d6e" stroke-width=".7"/></svg>
<div class="t" id="t56" style="left:277.70px;top:177.00px;font-size:14px;color:#1c1c1c;transform:scale(0.9819,1);">AHCQ-1136-A</div>
<div class="sw" style="left:452px;top:170.04500000000002px"><i style="background:#f5a623"></i></div>
<div class="abs" style="left:498px;top:172.04500000000002px;width:85px;height:26px;overflow:hidden">
<div class="t" id="t57" style="left:1.00px;top:4.95px;font-size:14px;color:#1c1c1c;transform:scale(1.0349,1);">Sourcing/Pricing</div>
</div>
<div class="t" id="t58" style="left:593.80px;top:177.00px;font-size:14.8px;color:#1c1c1c;letter-spacing:0.033px;">Aviaton Company</div>
<div class="t" id="t59" style="left:723.00px;top:176.00px;font-size:14px;color:#1c1c1c;">1</div>
<div class="t" id="t60" style="left:774.20px;top:177.00px;font-size:14.8px;color:#1c1c1c;letter-spacing:0.033px;">Aviaton Company</div>
<div class="t" id="t61" style="left:898.00px;top:176.00px;font-size:14px;color:#1c1c1c;">2</div>
<div class="t" id="t62" style="left:954.70px;top:177.00px;font-size:14px;color:#1c1c1c;">1</div>
<div class="t" id="t63" style="left:1091.30px;top:177.00px;font-size:14px;color:#1c1c1c;transform:scale(1.0518,1);">Feb/05/2025</div>
<div class="t" id="t64" style="left:1248.50px;top:176.00px;font-size:14px;color:#1c1c1c;transform:scale(1.0518,1);">Feb/07/2025</div>
<div class="t" id="t65" style="left:1413.70px;top:178.00px;font-size:14px;color:#1c1c1c;transform:scale(1.0518,1);">Feb/17/2025</div>
<div class="t" id="t66" style="left:1586.70px;top:176.00px;font-size:14px;color:#1c1c1c;transform:scale(0.9447,1);">quotes@i…</div>
<div class="t" id="t67" style="left:1678.20px;top:177.00px;font-size:14px;color:#1c1c1c;letter-spacing:0.113px;">United Kingdom</div>
<svg class="abs" style="left:17.400000000000006px;top:222.39000000000004px" width="14" height="10" viewBox="0 0 14 10"><path d="M1.600 2l5.400 5.400 5.400-5.400" fill="none" stroke="#505050" stroke-width="1.700"/></svg>
<div class="abs" style="left:1px;top:206.09000000000003px;width:93px;height:41px;overflow:hidden"><div class="go" style="left:51.599999999999994px;top:6.5px"></div></div>
<svg class="abs" style="left:61px;top:219.79000000000002px" width="10" height="13" viewBox="0 0 10 13"><path d="M1.900 .9l5.500 5.400-5.500 5.400" fill="none" stroke="#fff" stroke-width="1.900"/></svg>
<svg class="abs" style="left:109.30px;top:211.19px" width="31" height="31" viewBox="-15.500 -15.500 31 31"><path d="M0 -14.6 L7.3 -7.3 L0 0 L-7.3 -7.3Z" fill="#8c6468"/><path d="M-14.6 0 L-7.3 -7.3 L0 0 L-7.3 7.3Z" fill="#64649e"/><path d="M14.6 0 L7.3 -7.3 L0 0 L7.3 7.3Z" fill="#9a9468"/><path d="M0 14.6 L7.3 7.3 L0 0 L-7.3 7.3Z" fill="#9a9a9a"/><path d="M0 -14.6 L14.6 0 L0 14.6 L-14.6 0Z" fill="none" stroke="#68687a" stroke-width=".7"/></svg>
<svg class="abs" style="left:147.90px;top:209.89px" width="32" height="32" viewBox="-16 -16 32 32"><path d="M-12.500 -1.800 A12.600 12.600 0 0 1 9.300 -8.600" fill="none" stroke="#0a9e58" stroke-width="2.500"/><path d="M12.500 1.800 A12.600 12.600 0 0 1 -9.300 8.600" fill="none" stroke="#0a9e58" stroke-width="2.500"/><path d="M12.900 -12.400 L13.300 -3.600 L4.800 -5.400Z" fill="#0a9e58"/><path d="M-12.900 12.400 L-13.300 3.600 L-4.800 5.400Z" fill="#0a9e58"/><path d="M.3 -8.100v16.400" stroke="#0a9e58" stroke-width="1.500"/><path d="M3.300 -3.200 C3 -5.100 1.800 -5.600 .2 -5.600 C-1.700 -5.600 -2.800 -4.600 -2.800 -3.100 C-2.800 .2 3.500 -.9 3.500 2.700 C3.500 4.500 2.100 5.400 .2 5.400 C-1.900 5.400 -3 4.400 -3.200 2.600" fill="none" stroke="#0a9e58" stroke-width="2.300"/></svg>
<svg class="abs" style="left:187.05px;top:211.69px" width="30" height="30" viewBox="-15 -15 30 30"><circle r="14.150" fill="#1cc000"/><path fill="#ffffff" d="M-8.300 -2.800h4.300v9.800h-4.300z"/><path fill="#ffffff" d="M-2 -1.450 L-.5 -2.600 L1.500 -6.900 Q2.300 -7.800 3.200 -7 Q3.900 -5 3.600 -2.600 L9.300 -2.300 Q10.400 -1.300 10.100 -.2 Q10.300 1.200 9.700 2.400 Q9.700 3.800 9 4.800 Q8.800 6.300 7.700 7.050 L0 7.050 L-2 6Z"/></svg>
<svg class="abs" style="left:223.95px;top:211.59px" width="30" height="30" viewBox="-15 -15 30 30"><circle r="14.100" fill="#708d6e"/><path fill="#a09ba0" d="M-12.500 1.800 L-10.200 -5.500 L-7.800 -4.700 L-9.200 2.100Z"/><path fill="#a09ba0" d="M7.100 -4.700 L9.500 -5.500 L12 1.100 L9.400 2.100Z"/><path fill="#a09ba0" d="M-7.400 -3.700 L-3.700 -2.500 L-1.800 -4 L1.100 -4.700 L4 -3.500 L7 -3.100 L7.700 .5 L6 2.300 L7.800 3.700 L6 5 L5 6.100 L2.750 7.300 L.2 8.250 L-2.400 8.250 L-4.700 6.600 L-7 4.700 L-7.900 2.400 L-8.700 1.300Z"/><path d="M-4.800 -1.100 L-2.700 -.1 L-.5 -2.100 L1.100 -1.800 L2.800 -.2 L6.800 2.300" fill="none" stroke="#708d6e" stroke-width=".75"/><path d="M-7.300 3l2.300 1.500M-6 5l2.300 1.500M-4.200 6.700l2.200 1.400M-1.900 8l1.700-1.600M3.300 7.400l-1.500-2M5.400 6.200l-1.600-2M7 4.400l-2-1.600" fill="none" stroke="#708d6e" stroke-width=".7"/></svg>
<div class="t" id="t68" style="left:277.70px;top:220.00px;font-size:14px;color:#1c1c1c;transform:scale(0.9819,1);">AHCQ-1135-A</div>
<div class="sw" style="left:452px;top:213.09000000000003px"><i style="background:#b8e986"></i></div>
<div class="abs" style="left:498px;top:215.09000000000003px;width:85px;height:26px;overflow:hidden">
<div class="t" id="t69" style="left:1.00px;top:4.91px;font-size:14px;color:#1c1c1c;letter-spacing:-0.138px;">Sent</div>
</div>
<div class="t" id="t70" style="left:592.80px;top:220.00px;font-size:14.8px;color:#1c1c1c;letter-spacing:0.033px;">Aviaton Company</div>
<div class="t" id="t71" style="left:723.00px;top:219.00px;font-size:14px;color:#1c1c1c;">1</div>
<div class="t" id="t72" style="left:774.20px;top:221.00px;font-size:14.8px;color:#1c1c1c;letter-spacing:0.033px;">Aviaton Company</div>
<div class="t" id="t73" style="left:898.00px;top:220.00px;font-size:14px;color:#1c1c1c;">2</div>
<div class="t" id="t74" style="left:954.70px;top:220.00px;font-size:14px;color:#1c1c1c;">1</div>
<div class="t" id="t75" style="left:1091.30px;top:220.00px;font-size:14px;color:#1c1c1c;transform:scale(1.0518,1);">Feb/05/2025</div>
<div class="t" id="t76" style="left:1248.50px;top:219.00px;font-size:14px;color:#1c1c1c;transform:scale(1.0518,1);">Feb/07/2025</div>
<div class="t" id="t77" style="left:1413.70px;top:220.00px;font-size:14px;color:#1c1c1c;transform:scale(1.0518,1);">Feb/17/2025</div>
<div class="t" id="t78" style="left:1586.70px;top:220.00px;font-size:14px;color:#1c1c1c;transform:scale(0.9408,1);">nprodger…</div>
<div class="t" id="t79" style="left:1678.20px;top:220.00px;font-size:14px;color:#1c1c1c;letter-spacing:0.113px;">United Kingdom</div>
<svg class="abs" style="left:17.400000000000006px;top:265.135px" width="14" height="10" viewBox="0 0 14 10"><path d="M1.600 2l5.400 5.400 5.400-5.400" fill="none" stroke="#505050" stroke-width="1.700"/></svg>
<div class="abs" style="left:1px;top:248.83499999999998px;width:93px;height:41px;overflow:hidden"><div class="go" style="left:51.599999999999994px;top:6.5px"></div></div>
<svg class="abs" style="left:61px;top:262.53499999999997px" width="10" height="13" viewBox="0 0 10 13"><path d="M1.900 .9l5.500 5.400-5.500 5.400" fill="none" stroke="#fff" stroke-width="1.900"/></svg>
<svg class="abs" style="left:109.30px;top:253.94px" width="31" height="31" viewBox="-15.500 -15.500 31 31"><path d="M0 -14.6 L7.3 -7.3 L0 0 L-7.3 -7.3Z" fill="#c00000"/><path d="M-14.6 0 L-7.3 -7.3 L0 0 L-7.3 7.3Z" fill="#0000e8"/><path d="M14.6 0 L7.3 -7.3 L0 0 L7.3 7.3Z" fill="#ffe000"/><path d="M0 14.6 L7.3 7.3 L0 0 L-7.3 7.3Z" fill="#ffffff"/><path d="M0 -14.6 L14.6 0 L0 14.6 L-14.6 0Z" fill="none" stroke="#333" stroke-width=".7"/></svg>
<svg class="abs" style="left:147.90px;top:252.63px" width="32" height="32" viewBox="-16 -16 32 32"><path d="M-12.500 -1.800 A12.600 12.600 0 0 1 9.300 -8.600" fill="none" stroke="#0a9e58" stroke-width="2.500"/><path d="M12.500 1.800 A12.600 12.600 0 0 1 -9.300 8.600" fill="none" stroke="#0a9e58" stroke-width="2.500"/><path d="M12.900 -12.400 L13.300 -3.600 L4.800 -5.400Z" fill="#0a9e58"/><path d="M-12.900 12.400 L-13.300 3.600 L-4.800 5.400Z" fill="#0a9e58"/><path d="M.3 -8.100v16.400" stroke="#0a9e58" stroke-width="1.500"/><path d="M3.300 -3.200 C3 -5.100 1.800 -5.600 .2 -5.600 C-1.700 -5.600 -2.800 -4.600 -2.800 -3.100 C-2.800 .2 3.500 -.9 3.500 2.700 C3.500 4.500 2.100 5.400 .2 5.400 C-1.900 5.400 -3 4.400 -3.200 2.600" fill="none" stroke="#0a9e58" stroke-width="2.300"/></svg>
<svg class="abs" style="left:187.05px;top:254.44px" width="30" height="30" viewBox="-15 -15 30 30"><circle r="14.150" fill="#708d6e"/><path fill="#a2a2a2" d="M-8.300 -2.800h4.300v9.800h-4.300z"/><path fill="#a2a2a2" d="M-2 -1.450 L-.5 -2.600 L1.500 -6.900 Q2.300 -7.800 3.200 -7 Q3.900 -5 3.600 -2.600 L9.300 -2.300 Q10.400 -1.300 10.100 -.2 Q10.300 1.200 9.700 2.400 Q9.700 3.800 9 4.800 Q8.800 6.300 7.700 7.050 L0 7.050 L-2 6Z"/></svg>
<svg class="abs" style="left:223.95px;top:254.33px" width="30" height="30" viewBox="-15 -15 30 30"><circle r="14.100" fill="#3eb52e"/><path fill="#ffffff" d="M-12.500 1.800 L-10.200 -5.500 L-7.800 -4.700 L-9.200 2.100Z"/><path fill="#ffffff" d="M7.100 -4.700 L9.500 -5.500 L12 1.100 L9.400 2.100Z"/><path fill="#ffffff" d="M-7.400 -3.700 L-3.700 -2.500 L-1.800 -4 L1.100 -4.700 L4 -3.500 L7 -3.100 L7.700 .5 L6 2.300 L7.800 3.700 L6 5 L5 6.100 L2.750 7.300 L.2 8.250 L-2.400 8.250 L-4.700 6.600 L-7 4.700 L-7.900 2.400 L-8.700 1.300Z"/><path d="M-4.800 -1.100 L-2.700 -.1 L-.5 -2.100 L1.100 -1.800 L2.800 -.2 L6.800 2.300" fill="none" stroke="#3eb52e" stroke-width=".75"/><path d="M-7.300 3l2.300 1.500M-6 5l2.300 1.500M-4.200 6.700l2.200 1.400M-1.900 8l1.700-1.600M3.300 7.400l-1.500-2M5.400 6.200l-1.600-2M7 4.400l-2-1.600" fill="none" stroke="#3eb52e" stroke-width=".7"/></svg>
<div class="t" id="t80" style="left:277.70px;top:262.00px;font-size:14px;color:#1c1c1c;transform:scale(0.9819,1);">AHCQ-1134-A</div>
<div class="sw" style="left:452px;top:255.83499999999998px"><i style="background:#417505"></i></div>
<div class="abs" style="left:498px;top:257.835px;width:85px;height:26px;overflow:hidden">
<div class="t" id="t81" style="left:1.00px;top:5.17px;font-size:14px;color:#1c1c1c;transform:scale(0.9837,1);">Created</div>
</div>
<div class="t" id="t82" style="left:592.80px;top:263.00px;font-size:14px;color:#1c1c1c;transform:scale(1.0230,1);">Jorge Aviation Co</div>
<div class="t" id="t83" style="left:774.20px;top:263.00px;font-size:14px;color:#1c1c1c;transform:scale(1.0230,1);">Jorge Aviation Co</div>
<div class="t" id="t84" style="left:954.70px;top:263.00px;font-size:14px;color:#1c1c1c;">1</div>
<div class="t" id="t85" style="left:1091.30px;top:263.00px;font-size:14px;color:#1c1c1c;transform:scale(1.0518,1);">Feb/04/2025</div>
<div class="t" id="t86" style="left:1248.50px;top:265.00px;font-size:14px;color:#1c1c1c;transform:scale(1.0518,1);">Feb/06/2025</div>
<div class="t" id="t87" style="left:1413.20px;top:265.00px;font-size:14px;color:#1c1c1c;transform:scale(1.0518,1);">Feb/16/2025</div>
<div class="t" id="t88" style="left:1586.70px;top:262.00px;font-size:14px;color:#1c1c1c;transform:scale(0.9435,1);">jflores@a…</div>
<div class="t" id="t89" style="left:1678.20px;top:263.00px;font-size:14px;color:#1c1c1c;letter-spacing:0.099px;">United States America</div>
<svg class="abs" style="left:17.400000000000006px;top:308.48px" width="14" height="10" viewBox="0 0 14 10"><path d="M1.600 2l5.400 5.400 5.400-5.400" fill="none" stroke="#505050" stroke-width="1.700"/></svg>
<div class="abs" style="left:1px;top:292.18000000000006px;width:93px;height:41px;overflow:hidden"><div class="go" style="left:51.599999999999994px;top:6.5px"></div></div>
<svg class="abs" style="left:61px;top:305.8800000000001px" width="10" height="13" viewBox="0 0 10 13"><path d="M1.900 .9l5.500 5.400-5.500 5.400" fill="none" stroke="#fff" stroke-width="1.900"/></svg>
<svg class="abs" style="left:109.30px;top:297.28px" width="31" height="31" viewBox="-15.500 -15.500 31 31"><path d="M0 -14.6 L7.3 -7.3 L0 0 L-7.3 -7.3Z" fill="#8c6468"/><path d="M-14.6 0 L-7.3 -7.3 L0 0 L-7.3 7.3Z" fill="#64649e"/><path d="M14.6 0 L7.3 -7.3 L0 0 L7.3 7.3Z" fill="#9a9468"/><path d="M0 14.6 L7.3 7.3 L0 0 L-7.3 7.3Z" fill="#9a9a9a"/><path d="M0 -14.6 L14.6 0 L0 14.6 L-14.6 0Z" fill="none" stroke="#68687a" stroke-width=".7"/></svg>
<svg class="abs" style="left:147.90px;top:295.98px" width="32" height="32" viewBox="-16 -16 32 32"><path d="M-12.500 -1.800 A12.600 12.600 0 0 1 9.300 -8.600" fill="none" stroke="#0a9e58" stroke-width="2.500"/><path d="M12.500 1.800 A12.600 12.600 0 0 1 -9.300 8.600" fill="none" stroke="#0a9e58" stroke-width="2.500"/><path d="M12.900 -12.400 L13.300 -3.600 L4.800 -5.400Z" fill="#0a9e58"/><path d="M-12.900 12.400 L-13.300 3.600 L-4.800 5.400Z" fill="#0a9e58"/><path d="M.3 -8.100v16.400" stroke="#0a9e58" stroke-width="1.500"/><path d="M3.300 -3.200 C3 -5.100 1.800 -5.600 .2 -5.600 C-1.700 -5.600 -2.800 -4.600 -2.800 -3.100 C-2.800 .2 3.500 -.9 3.500 2.700 C3.500 4.500 2.100 5.400 .2 5.400 C-1.900 5.400 -3 4.400 -3.200 2.600" fill="none" stroke="#0a9e58" stroke-width="2.300"/></svg>
<svg class="abs" style="left:187.05px;top:297.78px" width="30" height="30" viewBox="-15 -15 30 30"><circle r="14.150" fill="#1cc000"/><path fill="#ffffff" d="M-8.300 -2.800h4.300v9.800h-4.300z"/><path fill="#ffffff" d="M-2 -1.450 L-.5 -2.600 L1.500 -6.900 Q2.300 -7.800 3.200 -7 Q3.900 -5 3.600 -2.600 L9.300 -2.300 Q10.400 -1.300 10.100 -.2 Q10.300 1.200 9.700 2.400 Q9.700 3.800 9 4.800 Q8.800 6.300 7.700 7.050 L0 7.050 L-2 6Z"/></svg>
<svg class="abs" style="left:223.95px;top:297.68px" width="30" height="30" viewBox="-15 -15 30 30"><circle r="14.100" fill="#708d6e"/><path fill="#a09ba0" d="M-12.500 1.800 L-10.200 -5.500 L-7.800 -4.700 L-9.200 2.100Z"/><path fill="#a09ba0" d="M7.100 -4.700 L9.500 -5.500 L12 1.100 L9.400 2.100Z"/><path fill="#a09ba0" d="M-7.400 -3.700 L-3.700 -2.500 L-1.800 -4 L1.100 -4.700 L4 -3.500 L7 -3.100 L7.700 .5 L6 2.300 L7.800 3.700 L6 5 L5 6.100 L2.750 7.300 L.2 8.250 L-2.400 8.250 L-4.700 6.600 L-7 4.700 L-7.900 2.400 L-8.700 1.300Z"/><path d="M-4.800 -1.100 L-2.700 -.1 L-.5 -2.100 L1.100 -1.800 L2.800 -.2 L6.800 2.300" fill="none" stroke="#708d6e" stroke-width=".75"/><path d="M-7.300 3l2.300 1.500M-6 5l2.300 1.500M-4.200 6.700l2.200 1.400M-1.900 8l1.700-1.600M3.300 7.400l-1.500-2M5.400 6.200l-1.600-2M7 4.400l-2-1.600" fill="none" stroke="#708d6e" stroke-width=".7"/></svg>
<div class="t" id="t90" style="left:277.70px;top:306.00px;font-size:14px;color:#1c1c1c;transform:scale(0.9819,1);">AHCQ-1133-A</div>
<div class="sw" style="left:452px;top:299.18000000000006px"><i style="background:#b8e986"></i></div>
<div class="abs" style="left:498px;top:301.18000000000006px;width:85px;height:26px;overflow:hidden">
<div class="t" id="t91" style="left:1.00px;top:4.82px;font-size:14px;color:#1c1c1c;letter-spacing:-0.138px;">Sent</div>
</div>
<div class="t" id="t92" style="left:592.30px;top:306.00px;font-size:14.8px;color:#1c1c1c;letter-spacing:0.033px;">Aviaton Company</div>
<div class="t" id="t93" style="left:715.70px;top:306.00px;font-size:14px;color:#1c1c1c;">2</div>
<div class="t" id="t94" style="left:774.20px;top:306.00px;font-size:14.8px;color:#1c1c1c;letter-spacing:0.033px;">Aviaton Company</div>
<div class="t" id="t95" style="left:897.50px;top:306.00px;font-size:14px;color:#1c1c1c;">3</div>
<div class="t" id="t96" style="left:954.70px;top:306.00px;font-size:14px;color:#1c1c1c;">1</div>
<div class="t" id="t97" style="left:1091.30px;top:306.00px;font-size:14px;color:#1c1c1c;transform:scale(1.0518,1);">Feb/04/2025</div>
<div class="t" id="t98" style="left:1247.50px;top:306.00px;font-size:14px;color:#1c1c1c;transform:scale(1.0518,1);">Feb/06/2025</div>
<div class="t" id="t99" style="left:1413.20px;top:306.00px;font-size:14px;color:#1c1c1c;transform:scale(1.0518,1);">Feb/16/2025</div>
<div class="t" id="t100" style="left:1586.70px;top:305.00px;font-size:14px;color:#1c1c1c;transform:scale(0.9219,1);">sales@ea…</div>
<div class="t" id="t101" style="left:1678.20px;top:306.00px;font-size:14px;color:#1c1c1c;letter-spacing:0.113px;">United Kingdom</div>
<svg class="abs" style="left:17.400000000000006px;top:351.525px" width="14" height="10" viewBox="0 0 14 10"><path d="M1.600 2l5.400 5.400 5.400-5.400" fill="none" stroke="#505050" stroke-width="1.700"/></svg>
<div class="abs" style="left:1px;top:335.225px;width:93px;height:41px;overflow:hidden"><div class="go" style="left:51.599999999999994px;top:6.5px"></div></div>
<svg class="abs" style="left:61px;top:348.92500000000007px" width="10" height="13" viewBox="0 0 10 13"><path d="M1.900 .9l5.500 5.400-5.500 5.400" fill="none" stroke="#fff" stroke-width="1.900"/></svg>
<svg class="abs" style="left:109.30px;top:340.33px" width="31" height="31" viewBox="-15.500 -15.500 31 31"><path d="M0 -14.6 L7.3 -7.3 L0 0 L-7.3 -7.3Z" fill="#8c6468"/><path d="M-14.6 0 L-7.3 -7.3 L0 0 L-7.3 7.3Z" fill="#64649e"/><path d="M14.6 0 L7.3 -7.3 L0 0 L7.3 7.3Z" fill="#9a9468"/><path d="M0 14.6 L7.3 7.3 L0 0 L-7.3 7.3Z" fill="#9a9a9a"/><path d="M0 -14.6 L14.6 0 L0 14.6 L-14.6 0Z" fill="none" stroke="#68687a" stroke-width=".7"/></svg>
<svg class="abs" style="left:147.90px;top:339.02px" width="32" height="32" viewBox="-16 -16 32 32"><path d="M-12.500 -1.800 A12.600 12.600 0 0 1 9.300 -8.600" fill="none" stroke="#0a9e58" stroke-width="2.500"/><path d="M12.500 1.800 A12.600 12.600 0 0 1 -9.300 8.600" fill="none" stroke="#0a9e58" stroke-width="2.500"/><path d="M12.900 -12.400 L13.300 -3.600 L4.800 -5.400Z" fill="#0a9e58"/><path d="M-12.900 12.400 L-13.300 3.600 L-4.800 5.400Z" fill="#0a9e58"/><path d="M.3 -8.100v16.400" stroke="#0a9e58" stroke-width="1.500"/><path d="M3.300 -3.200 C3 -5.100 1.800 -5.600 .2 -5.600 C-1.700 -5.600 -2.800 -4.600 -2.800 -3.100 C-2.800 .2 3.500 -.9 3.500 2.700 C3.500 4.500 2.100 5.400 .2 5.400 C-1.900 5.400 -3 4.400 -3.200 2.600" fill="none" stroke="#0a9e58" stroke-width="2.300"/></svg>
<svg class="abs" style="left:187.05px;top:340.83px" width="30" height="30" viewBox="-15 -15 30 30"><circle r="14.150" fill="#708d6e"/><path fill="#a2a2a2" d="M-8.300 -2.800h4.300v9.800h-4.300z"/><path fill="#a2a2a2" d="M-2 -1.450 L-.5 -2.600 L1.500 -6.900 Q2.300 -7.800 3.200 -7 Q3.900 -5 3.600 -2.600 L9.300 -2.300 Q10.400 -1.300 10.100 -.2 Q10.300 1.200 9.700 2.400 Q9.700 3.800 9 4.800 Q8.800 6.300 7.700 7.050 L0 7.050 L-2 6Z"/></svg>
<svg class="abs" style="left:223.95px;top:340.73px" width="30" height="30" viewBox="-15 -15 30 30"><circle r="14.100" fill="#708d6e"/><path fill="#a09ba0" d="M-12.500 1.800 L-10.200 -5.500 L-7.800 -4.700 L-9.200 2.100Z"/><path fill="#a09ba0" d="M7.100 -4.700 L9.500 -5.500 L12 1.100 L9.400 2.100Z"/><path fill="#a09ba0" d="M-7.400 -3.700 L-3.700 -2.500 L-1.800 -4 L1.100 -4.700 L4 -3.500 L7 -3.100 L7.700 .5 L6 2.300 L7.800 3.700 L6 5 L5 6.100 L2.750 7.300 L.2 8.250 L-2.400 8.250 L-4.700 6.600 L-7 4.700 L-7.900 2.400 L-8.700 1.300Z"/><path d="M-4.800 -1.100 L-2.700 -.1 L-.5 -2.100 L1.100 -1.800 L2.800 -.2 L6.800 2.300" fill="none" stroke="#708d6e" stroke-width=".75"/><path d="M-7.300 3l2.300 1.500M-6 5l2.300 1.500M-4.200 6.700l2.200 1.400M-1.900 8l1.700-1.600M3.300 7.400l-1.500-2M5.400 6.200l-1.600-2M7 4.400l-2-1.600" fill="none" stroke="#708d6e" stroke-width=".7"/></svg>
<div class="t" id="t102" style="left:277.70px;top:349.00px;font-size:14px;color:#1c1c1c;transform:scale(0.9819,1);">AHCQ-1132-A</div>
<div class="sw" style="left:452px;top:342.225px"><i style="background:#417505"></i></div>
<div class="abs" style="left:498px;top:344.225px;width:85px;height:26px;overflow:hidden">
<div class="t" id="t103" style="left:1.00px;top:4.77px;font-size:14px;color:#1c1c1c;transform:scale(0.9837,1);">Created</div>
</div>
<div class="t" id="t104" style="left:592.80px;top:349.00px;font-size:14.8px;color:#1c1c1c;letter-spacing:0.033px;">Aviaton Company</div>
<div class="t" id="t105" style="left:716.00px;top:349.00px;font-size:14px;color:#1c1c1c;">2</div>
<div class="t" id="t106" style="left:773.20px;top:350.00px;font-size:14.8px;color:#1c1c1c;letter-spacing:0.033px;">Aviaton Company</div>
<div class="t" id="t107" style="left:897.00px;top:350.00px;font-size:14px;color:#1c1c1c;">3</div>
<div class="t" id="t108" style="left:954.70px;top:349.00px;font-size:14px;color:#1c1c1c;">1</div>
<div class="t" id="t109" style="left:1091.30px;top:349.00px;font-size:14px;color:#1c1c1c;transform:scale(1.0518,1);">Feb/04/2025</div>
<div class="t" id="t110" style="left:1247.50px;top:349.00px;font-size:14px;color:#1c1c1c;transform:scale(1.0518,1);">Feb/06/2025</div>
<div class="t" id="t111" style="left:1413.20px;top:349.00px;font-size:14px;color:#1c1c1c;transform:scale(1.0518,1);">Feb/16/2025</div>
<div class="t" id="t112" style="left:1586.70px;top:349.00px;font-size:14px;color:#1c1c1c;transform:scale(0.9495,1);">jsmith@a…</div>
<div class="t" id="t113" style="left:1678.20px;top:349.00px;font-size:14px;color:#1c1c1c;transform:scale(0.9410,1);">UNITED STATES</div>
<svg class="abs" style="left:17.400000000000006px;top:394.56999999999994px" width="14" height="10" viewBox="0 0 14 10"><path d="M1.600 2l5.400 5.400 5.400-5.400" fill="none" stroke="#505050" stroke-width="1.700"/></svg>
<div class="abs" style="left:1px;top:378.27px;width:93px;height:41px;overflow:hidden"><div class="go" style="left:51.599999999999994px;top:6.5px"></div></div>
<svg class="abs" style="left:61px;top:391.97px" width="10" height="13" viewBox="0 0 10 13"><path d="M1.900 .9l5.500 5.400-5.500 5.400" fill="none" stroke="#fff" stroke-width="1.900"/></svg>
<svg class="abs" style="left:109.30px;top:383.37px" width="31" height="31" viewBox="-15.500 -15.500 31 31"><path d="M0 -14.6 L7.3 -7.3 L0 0 L-7.3 -7.3Z" fill="#8c6468"/><path d="M-14.6 0 L-7.3 -7.3 L0 0 L-7.3 7.3Z" fill="#64649e"/><path d="M14.6 0 L7.3 -7.3 L0 0 L7.3 7.3Z" fill="#9a9468"/><path d="M0 14.6 L7.3 7.3 L0 0 L-7.3 7.3Z" fill="#9a9a9a"/><path d="M0 -14.6 L14.6 0 L0 14.6 L-14.6 0Z" fill="none" stroke="#68687a" stroke-width=".7"/></svg>
<svg class="abs" style="left:147.90px;top:382.07px" width="32" height="32" viewBox="-16 -16 32 32"><path d="M-12.500 -1.800 A12.600 12.600 0 0 1 9.300 -8.600" fill="none" stroke="#0a9e58" stroke-width="2.500"/><path d="M12.500 1.800 A12.600 12.600 0 0 1 -9.300 8.600" fill="none" stroke="#0a9e58" stroke-width="2.500"/><path d="M12.900 -12.400 L13.300 -3.600 L4.800 -5.400Z" fill="#0a9e58"/><path d="M-12.900 12.400 L-13.300 3.600 L-4.800 5.400Z" fill="#0a9e58"/><path d="M.3 -8.100v16.400" stroke="#0a9e58" stroke-width="1.500"/><path d="M3.300 -3.200 C3 -5.100 1.800 -5.600 .2 -5.600 C-1.700 -5.600 -2.800 -4.600 -2.800 -3.100 C-2.800 .2 3.500 -.9 3.500 2.700 C3.500 4.500 2.100 5.400 .2 5.400 C-1.900 5.400 -3 4.400 -3.200 2.600" fill="none" stroke="#0a9e58" stroke-width="2.300"/></svg>
<svg class="abs" style="left:187.05px;top:383.87px" width="30" height="30" viewBox="-15 -15 30 30"><circle r="14.150" fill="#708d6e"/><path fill="#a2a2a2" d="M-8.300 -2.800h4.300v9.800h-4.300z"/><path fill="#a2a2a2" d="M-2 -1.450 L-.5 -2.600 L1.500 -6.900 Q2.300 -7.800 3.200 -7 Q3.900 -5 3.600 -2.600 L9.300 -2.300 Q10.400 -1.300 10.100 -.2 Q10.300 1.200 9.700 2.400 Q9.700 3.800 9 4.800 Q8.800 6.300 7.700 7.050 L0 7.050 L-2 6Z"/></svg>
<svg class="abs" style="left:223.95px;top:383.77px" width="30" height="30" viewBox="-15 -15 30 30"><circle r="14.100" fill="#708d6e"/><path fill="#a09ba0" d="M-12.500 1.800 L-10.200 -5.500 L-7.800 -4.700 L-9.200 2.100Z"/><path fill="#a09ba0" d="M7.100 -4.700 L9.500 -5.500 L12 1.100 L9.400 2.100Z"/><path fill="#a09ba0" d="M-7.400 -3.700 L-3.700 -2.500 L-1.800 -4 L1.100 -4.700 L4 -3.500 L7 -3.100 L7.700 .5 L6 2.300 L7.800 3.700 L6 5 L5 6.100 L2.750 7.300 L.2 8.250 L-2.400 8.250 L-4.700 6.600 L-7 4.700 L-7.900 2.400 L-8.700 1.300Z"/><path d="M-4.800 -1.100 L-2.700 -.1 L-.5 -2.100 L1.100 -1.800 L2.800 -.2 L6.800 2.300" fill="none" stroke="#708d6e" stroke-width=".75"/><path d="M-7.300 3l2.300 1.500M-6 5l2.300 1.500M-4.200 6.700l2.200 1.400M-1.900 8l1.700-1.600M3.300 7.400l-1.500-2M5.400 6.200l-1.600-2M7 4.400l-2-1.600" fill="none" stroke="#708d6e" stroke-width=".7"/></svg>
<div class="t" id="t114" style="left:277.70px;top:392.00px;font-size:14px;color:#1c1c1c;transform:scale(0.9819,1);">AHCQ-1131-A</div>
<div class="sw" style="left:452px;top:385.27px"><i style="background:#417505"></i></div>
<div class="abs" style="left:498px;top:387.27px;width:85px;height:26px;overflow:hidden">
<div class="t" id="t115" style="left:1.00px;top:4.73px;font-size:14px;color:#1c1c1c;transform:scale(0.9837,1);">Created</div>
</div>
<div class="t" id="t116" style="left:592.80px;top:392.00px;font-size:14px;color:#1c1c1c;transform:scale(1.0299,1);">Ambry Hill Technologies</div>
<div class="t" id="t117" style="left:776.70px;top:392.00px;font-size:14px;color:#1c1c1c;transform:scale(1.0299,1);">Ambry Hill Technologies</div>
<div class="t" id="t118" style="left:954.70px;top:392.00px;font-size:14px;color:#1c1c1c;">6</div>
<div class="t" id="t119" style="left:1091.30px;top:392.00px;font-size:14px;color:#1c1c1c;transform:scale(1.0518,1);">Feb/03/2025</div>
<div class="t" id="t120" style="left:1247.50px;top:393.00px;font-size:14px;color:#1c1c1c;transform:scale(1.0518,1);">Feb/05/2025</div>
<div class="t" id="t121" style="left:1413.20px;top:393.00px;font-size:14px;color:#1c1c1c;transform:scale(1.0518,1);">Feb/15/2025</div>
<div class="t" id="t122" style="left:1586.70px;top:392.00px;font-size:14px;color:#1c1c1c;transform:scale(0.9408,1);">nprodger…</div>
<div class="t" id="t123" style="left:1678.20px;top:392.00px;font-size:14px;color:#1c1c1c;letter-spacing:0.099px;">United States America</div>
<svg class="abs" style="left:17.400000000000006px;top:437.615px" width="14" height="10" viewBox="0 0 14 10"><path d="M1.600 2l5.400 5.400 5.400-5.400" fill="none" stroke="#505050" stroke-width="1.700"/></svg>
<div class="abs" style="left:1px;top:421.31500000000005px;width:93px;height:41px;overflow:hidden"><div class="go" style="left:51.599999999999994px;top:6.5px"></div></div>
<svg class="abs" style="left:61px;top:435.0150000000001px" width="10" height="13" viewBox="0 0 10 13"><path d="M1.900 .9l5.500 5.400-5.500 5.400" fill="none" stroke="#fff" stroke-width="1.900"/></svg>
<svg class="abs" style="left:109.30px;top:426.42px" width="31" height="31" viewBox="-15.500 -15.500 31 31"><path d="M0 -14.6 L7.3 -7.3 L0 0 L-7.3 -7.3Z" fill="#8c6468"/><path d="M-14.6 0 L-7.3 -7.3 L0 0 L-7.3 7.3Z" fill="#64649e"/><path d="M14.6 0 L7.3 -7.3 L0 0 L7.3 7.3Z" fill="#9a9468"/><path d="M0 14.6 L7.3 7.3 L0 0 L-7.3 7.3Z" fill="#9a9a9a"/><path d="M0 -14.6 L14.6 0 L0 14.6 L-14.6 0Z" fill="none" stroke="#68687a" stroke-width=".7"/></svg>
<svg class="abs" style="left:147.90px;top:425.12px" width="32" height="32" viewBox="-16 -16 32 32"><path d="M-12.500 -1.800 A12.600 12.600 0 0 1 9.300 -8.600" fill="none" stroke="#0a9e58" stroke-width="2.500"/><path d="M12.500 1.800 A12.600 12.600 0 0 1 -9.300 8.600" fill="none" stroke="#0a9e58" stroke-width="2.500"/><path d="M12.900 -12.400 L13.300 -3.600 L4.800 -5.400Z" fill="#0a9e58"/><path d="M-12.900 12.400 L-13.300 3.600 L-4.800 5.400Z" fill="#0a9e58"/><path d="M.3 -8.100v16.400" stroke="#0a9e58" stroke-width="1.500"/><path d="M3.300 -3.200 C3 -5.100 1.800 -5.600 .2 -5.600 C-1.700 -5.600 -2.800 -4.600 -2.800 -3.100 C-2.800 .2 3.500 -.9 3.500 2.700 C3.500 4.500 2.100 5.400 .2 5.400 C-1.900 5.400 -3 4.400 -3.200 2.600" fill="none" stroke="#0a9e58" stroke-width="2.300"/></svg>
<svg class="abs" style="left:187.05px;top:426.92px" width="30" height="30" viewBox="-15 -15 30 30"><circle r="14.150" fill="#708d6e"/><path fill="#a2a2a2" d="M-8.300 -2.800h4.300v9.800h-4.300z"/><path fill="#a2a2a2" d="M-2 -1.450 L-.5 -2.600 L1.500 -6.900 Q2.300 -7.800 3.200 -7 Q3.900 -5 3.600 -2.600 L9.300 -2.300 Q10.400 -1.300 10.100 -.2 Q10.300 1.200 9.700 2.400 Q9.700 3.800 9 4.800 Q8.800 6.300 7.700 7.050 L0 7.050 L-2 6Z"/></svg>
<svg class="abs" style="left:223.95px;top:426.82px" width="30" height="30" viewBox="-15 -15 30 30"><circle r="14.100" fill="#708d6e"/><path fill="#a09ba0" d="M-12.500 1.800 L-10.200 -5.500 L-7.800 -4.700 L-9.200 2.100Z"/><path fill="#a09ba0" d="M7.100 -4.700 L9.500 -5.500 L12 1.100 L9.400 2.100Z"/><path fill="#a09ba0" d="M-7.400 -3.700 L-3.700 -2.500 L-1.800 -4 L1.100 -4.700 L4 -3.500 L7 -3.100 L7.700 .5 L6 2.300 L7.800 3.700 L6 5 L5 6.100 L2.750 7.300 L.2 8.250 L-2.400 8.250 L-4.700 6.600 L-7 4.700 L-7.900 2.400 L-8.700 1.300Z"/><path d="M-4.800 -1.100 L-2.700 -.1 L-.5 -2.100 L1.100 -1.800 L2.800 -.2 L6.800 2.300" fill="none" stroke="#708d6e" stroke-width=".75"/><path d="M-7.300 3l2.300 1.500M-6 5l2.300 1.500M-4.200 6.700l2.200 1.400M-1.900 8l1.700-1.600M3.300 7.400l-1.500-2M5.400 6.200l-1.600-2M7 4.400l-2-1.600" fill="none" stroke="#708d6e" stroke-width=".7"/></svg>
<div class="t" id="t124" style="left:277.70px;top:435.00px;font-size:14px;color:#1c1c1c;transform:scale(0.9819,1);">AHCQ-1130-A</div>
<div class="sw" style="left:452px;top:428.31500000000005px"><i style="background:#417505"></i></div>
<div class="abs" style="left:498px;top:430.31500000000005px;width:85px;height:26px;overflow:hidden">
<div class="t" id="t125" style="left:1.00px;top:4.68px;font-size:14px;color:#1c1c1c;transform:scale(0.9837,1);">Created</div>
</div>
<div class="t" id="t126" style="left:593.80px;top:435.00px;font-size:14.8px;color:#1c1c1c;letter-spacing:0.033px;">Aviaton Company</div>
<div class="t" id="t127" style="left:717.00px;top:435.00px;font-size:14px;color:#1c1c1c;">6</div>
<div class="t" id="t128" style="left:773.20px;top:436.00px;font-size:14.8px;color:#1c1c1c;letter-spacing:0.033px;">Aviaton Company</div>
<div class="t" id="t129" style="left:897.00px;top:436.00px;font-size:14px;color:#1c1c1c;">3</div>
<div class="t" id="t130" style="left:954.70px;top:435.00px;font-size:14px;color:#1c1c1c;">2</div>
<div class="t" id="t131" style="left:1091.30px;top:435.00px;font-size:14px;color:#1c1c1c;transform:scale(1.0518,1);">Feb/03/2025</div>
<div class="t" id="t132" style="left:1247.50px;top:435.00px;font-size:14px;color:#1c1c1c;transform:scale(1.0518,1);">Feb/05/2025</div>
<div class="t" id="t133" style="left:1411.70px;top:435.00px;font-size:14px;color:#1c1c1c;transform:scale(1.0518,1);">Feb/06/2025</div>
<div class="t" id="t134" style="left:1586.70px;top:435.00px;font-size:14px;color:#1c1c1c;transform:scale(0.9571,1);">procurem…</div>
<div class="t" id="t135" style="left:1678.20px;top:435.00px;font-size:14px;color:#1c1c1c;transform:scale(0.9598,1);">FINLAND</div>
<svg class="abs" style="left:17.400000000000006px;top:480.65999999999997px" width="14" height="10" viewBox="0 0 14 10"><path d="M1.600 2l5.400 5.400 5.400-5.400" fill="none" stroke="#505050" stroke-width="1.700"/></svg>
<div class="abs" style="left:1px;top:464.36px;width:93px;height:41px;overflow:hidden"><div class="go" style="left:51.599999999999994px;top:6.5px"></div></div>
<svg class="abs" style="left:61px;top:478.06000000000006px" width="10" height="13" viewBox="0 0 10 13"><path d="M1.900 .9l5.500 5.400-5.500 5.400" fill="none" stroke="#fff" stroke-width="1.900"/></svg>
<svg class="abs" style="left:109.30px;top:469.46px" width="31" height="31" viewBox="-15.500 -15.500 31 31"><path d="M0 -14.6 L7.3 -7.3 L0 0 L-7.3 -7.3Z" fill="#8c6468"/><path d="M-14.6 0 L-7.3 -7.3 L0 0 L-7.3 7.3Z" fill="#64649e"/><path d="M14.6 0 L7.3 -7.3 L0 0 L7.3 7.3Z" fill="#9a9468"/><path d="M0 14.6 L7.3 7.3 L0 0 L-7.3 7.3Z" fill="#9a9a9a"/><path d="M0 -14.6 L14.6 0 L0 14.6 L-14.6 0Z" fill="none" stroke="#68687a" stroke-width=".7"/></svg>
<svg class="abs" style="left:147.90px;top:468.16px" width="32" height="32" viewBox="-16 -16 32 32"><path d="M-12.500 -1.800 A12.600 12.600 0 0 1 9.300 -8.600" fill="none" stroke="#0a9e58" stroke-width="2.500"/><path d="M12.500 1.800 A12.600 12.600 0 0 1 -9.300 8.600" fill="none" stroke="#0a9e58" stroke-width="2.500"/><path d="M12.900 -12.400 L13.300 -3.600 L4.800 -5.400Z" fill="#0a9e58"/><path d="M-12.900 12.400 L-13.300 3.600 L-4.800 5.400Z" fill="#0a9e58"/><path d="M.3 -8.100v16.400" stroke="#0a9e58" stroke-width="1.500"/><path d="M3.300 -3.200 C3 -5.100 1.800 -5.600 .2 -5.600 C-1.700 -5.600 -2.800 -4.600 -2.800 -3.100 C-2.800 .2 3.500 -.9 3.500 2.700 C3.500 4.500 2.100 5.400 .2 5.400 C-1.900 5.400 -3 4.400 -3.200 2.600" fill="none" stroke="#0a9e58" stroke-width="2.300"/></svg>
<svg class="abs" style="left:187.05px;top:469.96px" width="30" height="30" viewBox="-15 -15 30 30"><circle r="14.150" fill="#708d6e"/><path fill="#a2a2a2" d="M-8.300 -2.800h4.300v9.800h-4.300z"/><path fill="#a2a2a2" d="M-2 -1.450 L-.5 -2.600 L1.500 -6.900 Q2.300 -7.800 3.200 -7 Q3.900 -5 3.600 -2.600 L9.300 -2.300 Q10.400 -1.300 10.100 -.2 Q10.300 1.200 9.700 2.400 Q9.700 3.800 9 4.800 Q8.800 6.300 7.700 7.050 L0 7.050 L-2 6Z"/></svg>
<svg class="abs" style="left:223.95px;top:469.86px" width="30" height="30" viewBox="-15 -15 30 30"><circle r="14.100" fill="#708d6e"/><path fill="#a09ba0" d="M-12.500 1.800 L-10.200 -5.500 L-7.800 -4.700 L-9.200 2.100Z"/><path fill="#a09ba0" d="M7.100 -4.700 L9.500 -5.500 L12 1.100 L9.400 2.100Z"/><path fill="#a09ba0" d="M-7.400 -3.700 L-3.700 -2.500 L-1.800 -4 L1.100 -4.700 L4 -3.500 L7 -3.100 L7.700 .5 L6 2.300 L7.800 3.700 L6 5 L5 6.100 L2.750 7.300 L.2 8.250 L-2.400 8.250 L-4.700 6.600 L-7 4.700 L-7.900 2.400 L-8.700 1.300Z"/><path d="M-4.800 -1.100 L-2.700 -.1 L-.5 -2.100 L1.100 -1.800 L2.800 -.2 L6.800 2.300" fill="none" stroke="#708d6e" stroke-width=".75"/><path d="M-7.300 3l2.300 1.500M-6 5l2.300 1.500M-4.200 6.700l2.200 1.400M-1.900 8l1.700-1.600M3.300 7.400l-1.500-2M5.400 6.200l-1.600-2M7 4.400l-2-1.600" fill="none" stroke="#708d6e" stroke-width=".7"/></svg>
<div class="t" id="t136" style="left:277.70px;top:478.00px;font-size:14px;color:#1c1c1c;transform:scale(0.9819,1);">AHCQ-1129-A</div>
<div class="sw" style="left:452px;top:471.36px"><i style="background:#417505"></i></div>
<div class="abs" style="left:498px;top:473.36px;width:85px;height:26px;overflow:hidden">
<div class="t" id="t137" style="left:1.00px;top:5.64px;font-size:14px;color:#1c1c1c;transform:scale(0.9837,1);">Created</div>
</div>
<div class="t" id="t138" style="left:592.80px;top:478.00px;font-size:14px;color:#1c1c1c;transform:scale(1.0299,1);">Ambry Hill Technologies</div>
<div class="t" id="t139" style="left:774.20px;top:478.00px;font-size:14px;color:#1c1c1c;transform:scale(1.0299,1);">Ambry Hill Technologies</div>
<div class="t" id="t140" style="left:954.70px;top:478.00px;font-size:14px;color:#1c1c1c;">1</div>
<div class="t" id="t141" style="left:1091.30px;top:478.00px;font-size:14px;color:#1c1c1c;transform:scale(1.0518,1);">Feb/03/2025</div>
<div class="t" id="t142" style="left:1247.50px;top:478.00px;font-size:14px;color:#1c1c1c;transform:scale(1.0518,1);">Feb/08/2025</div>
<div class="t" id="t143" style="left:1411.70px;top:478.00px;font-size:14px;color:#1c1c1c;transform:scale(1.0518,1);">Feb/07/2025</div>
<div class="t" id="t144" style="left:1586.70px;top:478.00px;font-size:14px;color:#1c1c1c;transform:scale(0.9099,1);">sales@a…</div>
<div class="t" id="t145" style="left:1678.20px;top:478.00px;font-size:14px;color:#1c1c1c;letter-spacing:0.099px;">United States America</div>
<svg class="abs" style="left:17.400000000000006px;top:523.7049999999999px" width="14" height="10" viewBox="0 0 14 10"><path d="M1.600 2l5.400 5.400 5.400-5.400" fill="none" stroke="#505050" stroke-width="1.700"/></svg>
<div class="abs" style="left:1px;top:507.405px;width:93px;height:41px;overflow:hidden"><div class="go" style="left:51.599999999999994px;top:6.5px"></div></div>
<svg class="abs" style="left:61px;top:521.105px" width="10" height="13" viewBox="0 0 10 13"><path d="M1.900 .9l5.500 5.400-5.500 5.400" fill="none" stroke="#fff" stroke-width="1.900"/></svg>
<svg class="abs" style="left:109.30px;top:512.50px" width="31" height="31" viewBox="-15.500 -15.500 31 31"><path d="M0 -14.6 L7.3 -7.3 L0 0 L-7.3 -7.3Z" fill="#8c6468"/><path d="M-14.6 0 L-7.3 -7.3 L0 0 L-7.3 7.3Z" fill="#64649e"/><path d="M14.6 0 L7.3 -7.3 L0 0 L7.3 7.3Z" fill="#9a9468"/><path d="M0 14.6 L7.3 7.3 L0 0 L-7.3 7.3Z" fill="#9a9a9a"/><path d="M0 -14.6 L14.6 0 L0 14.6 L-14.6 0Z" fill="none" stroke="#68687a" stroke-width=".7"/></svg>
<svg class="abs" style="left:147.90px;top:511.20px" width="32" height="32" viewBox="-16 -16 32 32"><path d="M-12.500 -1.800 A12.600 12.600 0 0 1 9.300 -8.600" fill="none" stroke="#0a9e58" stroke-width="2.500"/><path d="M12.500 1.800 A12.600 12.600 0 0 1 -9.300 8.600" fill="none" stroke="#0a9e58" stroke-width="2.500"/><path d="M12.900 -12.400 L13.300 -3.600 L4.800 -5.400Z" fill="#0a9e58"/><path d="M-12.900 12.400 L-13.300 3.600 L-4.800 5.400Z" fill="#0a9e58"/><path d="M.3 -8.100v16.400" stroke="#0a9e58" stroke-width="1.500"/><path d="M3.300 -3.200 C3 -5.100 1.800 -5.600 .2 -5.600 C-1.700 -5.600 -2.800 -4.600 -2.800 -3.100 C-2.800 .2 3.500 -.9 3.500 2.700 C3.500 4.500 2.100 5.400 .2 5.400 C-1.900 5.400 -3 4.400 -3.200 2.600" fill="none" stroke="#0a9e58" stroke-width="2.300"/></svg>
<svg class="abs" style="left:187.05px;top:513.00px" width="30" height="30" viewBox="-15 -15 30 30"><circle r="14.150" fill="#708d6e"/><path fill="#a2a2a2" d="M-8.300 -2.800h4.300v9.800h-4.300z"/><path fill="#a2a2a2" d="M-2 -1.450 L-.5 -2.600 L1.500 -6.900 Q2.300 -7.800 3.200 -7 Q3.900 -5 3.600 -2.600 L9.300 -2.300 Q10.400 -1.300 10.100 -.2 Q10.300 1.200 9.700 2.400 Q9.700 3.800 9 4.800 Q8.800 6.300 7.700 7.050 L0 7.050 L-2 6Z"/></svg>
<svg class="abs" style="left:223.95px;top:512.90px" width="30" height="30" viewBox="-15 -15 30 30"><circle r="14.100" fill="#3eb52e"/><path fill="#ffffff" d="M-12.500 1.800 L-10.200 -5.500 L-7.800 -4.700 L-9.200 2.100Z"/><path fill="#ffffff" d="M7.100 -4.700 L9.500 -5.500 L12 1.100 L9.400 2.100Z"/><path fill="#ffffff" d="M-7.400 -3.700 L-3.700 -2.500 L-1.800 -4 L1.100 -4.700 L4 -3.500 L7 -3.100 L7.700 .5 L6 2.300 L7.800 3.700 L6 5 L5 6.100 L2.750 7.300 L.2 8.250 L-2.400 8.250 L-4.700 6.600 L-7 4.700 L-7.900 2.400 L-8.700 1.300Z"/><path d="M-4.800 -1.100 L-2.700 -.1 L-.5 -2.100 L1.100 -1.800 L2.800 -.2 L6.800 2.300" fill="none" stroke="#3eb52e" stroke-width=".75"/><path d="M-7.300 3l2.300 1.500M-6 5l2.300 1.500M-4.200 6.700l2.200 1.400M-1.900 8l1.700-1.600M3.300 7.400l-1.500-2M5.400 6.200l-1.600-2M7 4.400l-2-1.600" fill="none" stroke="#3eb52e" stroke-width=".7"/></svg>
<div class="t" id="t146" style="left:277.70px;top:521.00px;font-size:14px;color:#1c1c1c;transform:scale(0.9819,1);">AHCQ-1128-A</div>
<div class="sw" style="left:452px;top:514.405px"><i style="background:#417505"></i></div>
<div class="abs" style="left:498px;top:516.405px;width:85px;height:26px;overflow:hidden">
<div class="t" id="t147" style="left:1.00px;top:5.60px;font-size:14px;color:#1c1c1c;transform:scale(0.9837,1);">Created</div>
</div>
<div class="t" id="t148" style="left:593.30px;top:520.00px;font-size:14.8px;color:#1c1c1c;letter-spacing:0.033px;">Aviaton Company</div>
<div class="t" id="t149" style="left:716.50px;top:520.00px;font-size:14px;color:#1c1c1c;">6</div>
<div class="t" id="t150" style="left:773.20px;top:520.00px;font-size:14.8px;color:#1c1c1c;letter-spacing:0.033px;">Aviaton Company</div>
<div class="t" id="t151" style="left:904.00px;top:520.00px;font-size:14px;color:#1c1c1c;">1</div>
<div class="t" id="t152" style="left:954.70px;top:521.00px;font-size:14px;color:#1c1c1c;">2</div>
<div class="t" id="t153" style="left:1091.30px;top:521.00px;font-size:14px;color:#1c1c1c;transform:scale(1.0729,1);">Jan/31/2025</div>
<div class="t" id="t154" style="left:1247.50px;top:521.00px;font-size:14px;color:#1c1c1c;transform:scale(1.0518,1);">Feb/02/2025</div>
<div class="t" id="t155" style="left:1412.70px;top:521.00px;font-size:14px;color:#1c1c1c;transform:scale(1.0518,1);">Feb/12/2025</div>
<div class="t" id="t156" style="left:1588.20px;top:523.00px;font-size:14px;color:#1c1c1c;transform:scale(0.9099,1);">sales@a…</div>
<div class="t" id="t157" style="left:1678.20px;top:521.00px;font-size:14px;color:#1c1c1c;letter-spacing:0.099px;">United States America</div>
<svg class="abs" style="left:17.400000000000006px;top:566.75px" width="14" height="10" viewBox="0 0 14 10"><path d="M1.600 2l5.400 5.400 5.400-5.400" fill="none" stroke="#505050" stroke-width="1.700"/></svg>
<div class="abs" style="left:1px;top:550.45px;width:93px;height:41px;overflow:hidden"><div class="go" style="left:51.599999999999994px;top:6.5px"></div></div>
<svg class="abs" style="left:61px;top:564.1500000000001px" width="10" height="13" viewBox="0 0 10 13"><path d="M1.900 .9l5.500 5.400-5.500 5.400" fill="none" stroke="#fff" stroke-width="1.900"/></svg>
<svg class="abs" style="left:109.30px;top:555.55px" width="31" height="31" viewBox="-15.500 -15.500 31 31"><path d="M0 -14.6 L7.3 -7.3 L0 0 L-7.3 -7.3Z" fill="#8c6468"/><path d="M-14.6 0 L-7.3 -7.3 L0 0 L-7.3 7.3Z" fill="#64649e"/><path d="M14.6 0 L7.3 -7.3 L0 0 L7.3 7.3Z" fill="#9a9468"/><path d="M0 14.6 L7.3 7.3 L0 0 L-7.3 7.3Z" fill="#9a9a9a"/><path d="M0 -14.6 L14.6 0 L0 14.6 L-14.6 0Z" fill="none" stroke="#68687a" stroke-width=".7"/></svg>
<svg class="abs" style="left:147.90px;top:554.25px" width="32" height="32" viewBox="-16 -16 32 32"><path d="M-12.500 -1.800 A12.600 12.600 0 0 1 9.300 -8.600" fill="none" stroke="#0a9e58" stroke-width="2.500"/><path d="M12.500 1.800 A12.600 12.600 0 0 1 -9.300 8.600" fill="none" stroke="#0a9e58" stroke-width="2.500"/><path d="M12.900 -12.400 L13.300 -3.600 L4.800 -5.400Z" fill="#0a9e58"/><path d="M-12.900 12.400 L-13.300 3.600 L-4.800 5.400Z" fill="#0a9e58"/><path d="M.3 -8.100v16.400" stroke="#0a9e58" stroke-width="1.500"/><path d="M3.300 -3.200 C3 -5.100 1.800 -5.600 .2 -5.600 C-1.700 -5.600 -2.800 -4.600 -2.800 -3.100 C-2.800 .2 3.500 -.9 3.500 2.700 C3.500 4.500 2.100 5.400 .2 5.400 C-1.900 5.400 -3 4.400 -3.200 2.600" fill="none" stroke="#0a9e58" stroke-width="2.300"/></svg>
<svg class="abs" style="left:187.05px;top:556.05px" width="30" height="30" viewBox="-15 -15 30 30"><circle r="14.150" fill="#708d6e"/><path fill="#a2a2a2" d="M-8.300 -2.800h4.300v9.800h-4.300z"/><path fill="#a2a2a2" d="M-2 -1.450 L-.5 -2.600 L1.500 -6.900 Q2.300 -7.800 3.200 -7 Q3.900 -5 3.600 -2.600 L9.300 -2.300 Q10.400 -1.300 10.100 -.2 Q10.300 1.200 9.700 2.400 Q9.700 3.800 9 4.800 Q8.800 6.300 7.700 7.050 L0 7.050 L-2 6Z"/></svg>
<svg class="abs" style="left:223.95px;top:555.95px" width="30" height="30" viewBox="-15 -15 30 30"><circle r="14.100" fill="#3eb52e"/><path fill="#ffffff" d="M-12.500 1.800 L-10.200 -5.500 L-7.800 -4.700 L-9.200 2.100Z"/><path fill="#ffffff" d="M7.100 -4.700 L9.500 -5.500 L12 1.100 L9.400 2.100Z"/><path fill="#ffffff" d="M-7.400 -3.700 L-3.700 -2.500 L-1.800 -4 L1.100 -4.700 L4 -3.500 L7 -3.100 L7.700 .5 L6 2.300 L7.800 3.700 L6 5 L5 6.100 L2.750 7.300 L.2 8.250 L-2.400 8.250 L-4.700 6.600 L-7 4.700 L-7.900 2.400 L-8.700 1.300Z"/><path d="M-4.800 -1.100 L-2.700 -.1 L-.5 -2.100 L1.100 -1.800 L2.800 -.2 L6.800 2.300" fill="none" stroke="#3eb52e" stroke-width=".75"/><path d="M-7.300 3l2.300 1.500M-6 5l2.300 1.500M-4.200 6.700l2.200 1.400M-1.900 8l1.700-1.600M3.300 7.400l-1.500-2M5.400 6.200l-1.600-2M7 4.400l-2-1.600" fill="none" stroke="#3eb52e" stroke-width=".7"/></svg>
<div class="t" id="t158" style="left:277.70px;top:564.00px;font-size:14px;color:#1c1c1c;transform:scale(0.9819,1);">AHCQ-1127-A</div>
<div class="sw" style="left:452px;top:557.45px"><i style="background:#417505"></i></div>
<div class="abs" style="left:498px;top:559.45px;width:85px;height:26px;overflow:hidden">
<div class="t" id="t159" style="left:1.00px;top:5.55px;font-size:14px;color:#1c1c1c;transform:scale(0.9837,1);">Created</div>
</div>
<div class="t" id="t160" style="left:592.30px;top:563.00px;font-size:14.8px;color:#1c1c1c;letter-spacing:0.033px;">Aviaton Company</div>
<div class="t" id="t161" style="left:715.50px;top:563.00px;font-size:14px;color:#1c1c1c;">6</div>
<div class="t" id="t162" style="left:773.20px;top:563.00px;font-size:14.8px;color:#1c1c1c;letter-spacing:0.033px;">Aviaton Company</div>
<div class="t" id="t163" style="left:903.00px;top:563.00px;font-size:14px;color:#1c1c1c;">1</div>
<div class="t" id="t164" style="left:954.70px;top:564.00px;font-size:14px;color:#1c1c1c;">1</div>
<div class="t" id="t165" style="left:1091.30px;top:564.00px;font-size:14px;color:#1c1c1c;transform:scale(1.0729,1);">Jan/29/2025</div>
<div class="t" id="t166" style="left:1247.50px;top:564.00px;font-size:14px;color:#1c1c1c;transform:scale(1.0518,1);">Feb/01/2025</div>
<div class="t" id="t167" style="left:1411.70px;top:564.00px;font-size:14px;color:#1c1c1c;transform:scale(1.0658,1);">Feb/11/2025</div>
<div class="t" id="t168" style="left:1588.20px;top:565.00px;font-size:14px;color:#1c1c1c;transform:scale(0.9099,1);">sales@a…</div>
<div class="t" id="t169" style="left:1678.20px;top:564.00px;font-size:14px;color:#1c1c1c;transform:scale(0.9410,1);">UNITED STATES</div>
<svg class="abs" style="left:17.400000000000006px;top:609.795px" width="14" height="10" viewBox="0 0 14 10"><path d="M1.600 2l5.400 5.400 5.400-5.400" fill="none" stroke="#505050" stroke-width="1.700"/></svg>
<div class="abs" style="left:1px;top:593.495px;width:93px;height:41px;overflow:hidden"><div class="go" style="left:51.599999999999994px;top:6.5px"></div></div>
<svg class="abs" style="left:61px;top:607.195px" width="10" height="13" viewBox="0 0 10 13"><path d="M1.900 .9l5.500 5.400-5.500 5.400" fill="none" stroke="#fff" stroke-width="1.900"/></svg>
<svg class="abs" style="left:109.30px;top:598.60px" width="31" height="31" viewBox="-15.500 -15.500 31 31"><path d="M0 -14.6 L7.3 -7.3 L0 0 L-7.3 -7.3Z" fill="#8c6468"/><path d="M-14.6 0 L-7.3 -7.3 L0 0 L-7.3 7.3Z" fill="#64649e"/><path d="M14.6 0 L7.3 -7.3 L0 0 L7.3 7.3Z" fill="#9a9468"/><path d="M0 14.6 L7.3 7.3 L0 0 L-7.3 7.3Z" fill="#9a9a9a"/><path d="M0 -14.6 L14.6 0 L0 14.6 L-14.6 0Z" fill="none" stroke="#68687a" stroke-width=".7"/></svg>
<svg class="abs" style="left:147.90px;top:597.29px" width="32" height="32" viewBox="-16 -16 32 32"><path d="M-12.500 -1.800 A12.600 12.600 0 0 1 9.300 -8.600" fill="none" stroke="#0a9e58" stroke-width="2.500"/><path d="M12.500 1.800 A12.600 12.600 0 0 1 -9.300 8.600" fill="none" stroke="#0a9e58" stroke-width="2.500"/><path d="M12.900 -12.400 L13.300 -3.600 L4.800 -5.400Z" fill="#0a9e58"/><path d="M-12.900 12.400 L-13.300 3.600 L-4.800 5.400Z" fill="#0a9e58"/><path d="M.3 -8.100v16.400" stroke="#0a9e58" stroke-width="1.500"/><path d="M3.300 -3.200 C3 -5.100 1.800 -5.600 .2 -5.600 C-1.700 -5.600 -2.800 -4.600 -2.800 -3.100 C-2.800 .2 3.500 -.9 3.500 2.700 C3.500 4.500 2.100 5.400 .2 5.400 C-1.900 5.400 -3 4.400 -3.200 2.600" fill="none" stroke="#0a9e58" stroke-width="2.300"/></svg>
<svg class="abs" style="left:187.05px;top:599.10px" width="30" height="30" viewBox="-15 -15 30 30"><circle r="14.150" fill="#708d6e"/><path fill="#a2a2a2" d="M-8.300 -2.800h4.300v9.800h-4.300z"/><path fill="#a2a2a2" d="M-2 -1.450 L-.5 -2.600 L1.500 -6.900 Q2.300 -7.800 3.200 -7 Q3.900 -5 3.600 -2.600 L9.300 -2.300 Q10.400 -1.300 10.100 -.2 Q10.300 1.200 9.700 2.400 Q9.700 3.800 9 4.800 Q8.800 6.300 7.700 7.050 L0 7.050 L-2 6Z"/></svg>
<svg class="abs" style="left:223.95px;top:599.00px" width="30" height="30" viewBox="-15 -15 30 30"><circle r="14.100" fill="#708d6e"/><path fill="#a09ba0" d="M-12.500 1.800 L-10.200 -5.500 L-7.800 -4.700 L-9.200 2.100Z"/><path fill="#a09ba0" d="M7.100 -4.700 L9.500 -5.500 L12 1.100 L9.400 2.100Z"/><path fill="#a09ba0" d="M-7.400 -3.700 L-3.700 -2.500 L-1.800 -4 L1.100 -4.700 L4 -3.500 L7 -3.100 L7.700 .5 L6 2.300 L7.800 3.700 L6 5 L5 6.100 L2.750 7.300 L.2 8.250 L-2.400 8.250 L-4.700 6.600 L-7 4.700 L-7.900 2.400 L-8.700 1.300Z"/><path d="M-4.800 -1.100 L-2.700 -.1 L-.5 -2.100 L1.100 -1.800 L2.800 -.2 L6.800 2.300" fill="none" stroke="#708d6e" stroke-width=".75"/><path d="M-7.300 3l2.300 1.500M-6 5l2.300 1.500M-4.200 6.700l2.200 1.400M-1.900 8l1.700-1.600M3.300 7.400l-1.500-2M5.400 6.200l-1.600-2M7 4.400l-2-1.600" fill="none" stroke="#708d6e" stroke-width=".7"/></svg>
<div class="t" id="t170" style="left:277.70px;top:607.00px;font-size:14px;color:#1c1c1c;transform:scale(0.9819,1);">AHCQ-1126-A</div>
<div class="sw" style="left:452px;top:600.495px"><i style="background:#417505"></i></div>
<div class="abs" style="left:498px;top:602.495px;width:85px;height:26px;overflow:hidden">
<div class="t" id="t171" style="left:1.00px;top:5.50px;font-size:14px;color:#1c1c1c;transform:scale(0.9837,1);">Created</div>
</div>
<div class="t" id="t172" style="left:591.30px;top:605.00px;font-size:14.8px;color:#1c1c1c;letter-spacing:0.033px;">Aviaton Company</div>
<div class="t" id="t173" style="left:722.00px;top:605.00px;font-size:14px;color:#1c1c1c;">1</div>
<div class="t" id="t174" style="left:772.20px;top:606.00px;font-size:14.8px;color:#1c1c1c;letter-spacing:0.033px;">Aviaton Company</div>
<div class="t" id="t175" style="left:895.50px;top:606.00px;font-size:14px;color:#1c1c1c;">3</div>
<div class="t" id="t176" style="left:954.70px;top:607.00px;font-size:14px;color:#1c1c1c;">1</div>
<div class="t" id="t177" style="left:1091.30px;top:607.00px;font-size:14px;color:#1c1c1c;transform:scale(1.0729,1);">Jan/28/2025</div>
<div class="t" id="t178" style="left:1247.50px;top:607.00px;font-size:14px;color:#1c1c1c;transform:scale(1.0518,1);">Feb/01/2025</div>
<div class="t" id="t179" style="left:1412.70px;top:608.00px;font-size:14px;color:#1c1c1c;transform:scale(1.0658,1);">Feb/11/2025</div>
<div class="t" id="t180" style="left:1586.70px;top:607.00px;font-size:14px;color:#1c1c1c;transform:scale(0.9571,1);">procurem…</div>
<div class="t" id="t181" style="left:1678.20px;top:607.00px;font-size:14px;color:#1c1c1c;transform:scale(0.9598,1);">FINLAND</div>
<svg class="abs" style="left:17.400000000000006px;top:652.8399999999999px" width="14" height="10" viewBox="0 0 14 10"><path d="M1.600 2l5.400 5.400 5.400-5.400" fill="none" stroke="#505050" stroke-width="1.700"/></svg>
<div class="abs" style="left:1px;top:636.54px;width:93px;height:41px;overflow:hidden"><div class="go" style="left:51.599999999999994px;top:6.5px"></div></div>
<svg class="abs" style="left:61px;top:650.24px" width="10" height="13" viewBox="0 0 10 13"><path d="M1.900 .9l5.500 5.400-5.500 5.400" fill="none" stroke="#fff" stroke-width="1.900"/></svg>
<svg class="abs" style="left:109.30px;top:641.64px" width="31" height="31" viewBox="-15.500 -15.500 31 31"><path d="M0 -14.6 L7.3 -7.3 L0 0 L-7.3 -7.3Z" fill="#8c6468"/><path d="M-14.6 0 L-7.3 -7.3 L0 0 L-7.3 7.3Z" fill="#64649e"/><path d="M14.6 0 L7.3 -7.3 L0 0 L7.3 7.3Z" fill="#9a9468"/><path d="M0 14.6 L7.3 7.3 L0 0 L-7.3 7.3Z" fill="#9a9a9a"/><path d="M0 -14.6 L14.6 0 L0 14.6 L-14.6 0Z" fill="none" stroke="#68687a" stroke-width=".7"/></svg>
<svg class="abs" style="left:147.90px;top:640.34px" width="32" height="32" viewBox="-16 -16 32 32"><path d="M-12.500 -1.800 A12.600 12.600 0 0 1 9.300 -8.600" fill="none" stroke="#0a9e58" stroke-width="2.500"/><path d="M12.500 1.800 A12.600 12.600 0 0 1 -9.300 8.600" fill="none" stroke="#0a9e58" stroke-width="2.500"/><path d="M12.900 -12.400 L13.300 -3.600 L4.800 -5.400Z" fill="#0a9e58"/><path d="M-12.900 12.400 L-13.300 3.600 L-4.800 5.400Z" fill="#0a9e58"/><path d="M.3 -8.100v16.400" stroke="#0a9e58" stroke-width="1.500"/><path d="M3.300 -3.200 C3 -5.100 1.800 -5.600 .2 -5.600 C-1.700 -5.600 -2.800 -4.600 -2.800 -3.100 C-2.800 .2 3.500 -.9 3.500 2.700 C3.500 4.500 2.100 5.400 .2 5.400 C-1.900 5.400 -3 4.400 -3.200 2.600" fill="none" stroke="#0a9e58" stroke-width="2.300"/></svg>
<svg class="abs" style="left:187.05px;top:642.14px" width="30" height="30" viewBox="-15 -15 30 30"><circle r="14.150" fill="#708d6e"/><path fill="#a2a2a2" d="M-8.300 -2.800h4.300v9.800h-4.300z"/><path fill="#a2a2a2" d="M-2 -1.450 L-.5 -2.600 L1.500 -6.900 Q2.300 -7.800 3.200 -7 Q3.900 -5 3.600 -2.600 L9.300 -2.300 Q10.400 -1.300 10.100 -.2 Q10.300 1.200 9.700 2.400 Q9.700 3.800 9 4.800 Q8.800 6.300 7.700 7.050 L0 7.050 L-2 6Z"/></svg>
<svg class="abs" style="left:223.95px;top:642.04px" width="30" height="30" viewBox="-15 -15 30 30"><circle r="14.100" fill="#708d6e"/><path fill="#a09ba0" d="M-12.500 1.800 L-10.200 -5.500 L-7.800 -4.700 L-9.200 2.100Z"/><path fill="#a09ba0" d="M7.100 -4.700 L9.500 -5.500 L12 1.100 L9.400 2.100Z"/><path fill="#a09ba0" d="M-7.400 -3.700 L-3.700 -2.500 L-1.800 -4 L1.100 -4.700 L4 -3.500 L7 -3.100 L7.700 .5 L6 2.300 L7.800 3.700 L6 5 L5 6.100 L2.750 7.300 L.2 8.250 L-2.400 8.250 L-4.700 6.600 L-7 4.700 L-7.900 2.400 L-8.700 1.300Z"/><path d="M-4.800 -1.100 L-2.700 -.1 L-.5 -2.100 L1.100 -1.800 L2.800 -.2 L6.800 2.300" fill="none" stroke="#708d6e" stroke-width=".75"/><path d="M-7.300 3l2.300 1.500M-6 5l2.300 1.500M-4.200 6.700l2.200 1.400M-1.900 8l1.700-1.600M3.300 7.400l-1.500-2M5.400 6.200l-1.600-2M7 4.400l-2-1.600" fill="none" stroke="#708d6e" stroke-width=".7"/></svg>
<div class="t" id="t182" style="left:277.70px;top:650.00px;font-size:14px;color:#1c1c1c;transform:scale(0.9819,1);">AHCQ-1125-A</div>
<div class="sw" style="left:452px;top:643.54px"><i style="background:#417505"></i></div>
<div class="abs" style="left:498px;top:645.54px;width:85px;height:26px;overflow:hidden">
<div class="t" id="t183" style="left:1.00px;top:5.46px;font-size:14px;color:#1c1c1c;transform:scale(0.9837,1);">Created</div>
</div>
<div class="t" id="t184" style="left:592.30px;top:648.00px;font-size:14.8px;color:#1c1c1c;letter-spacing:0.033px;">Aviaton Company</div>
<div class="t" id="t185" style="left:715.50px;top:648.00px;font-size:14px;color:#1c1c1c;">6</div>
<div class="t" id="t186" style="left:772.20px;top:650.00px;font-size:14.8px;color:#1c1c1c;letter-spacing:0.033px;">Aviaton Company</div>
<div class="t" id="t187" style="left:896.00px;top:650.00px;font-size:14px;color:#1c1c1c;">3</div>
<div class="t" id="t188" style="left:954.70px;top:650.00px;font-size:14px;color:#1c1c1c;">3</div>
<div class="t" id="t189" style="left:1091.30px;top:650.00px;font-size:14px;color:#1c1c1c;transform:scale(1.0729,1);">Jan/28/2025</div>
<div class="t" id="t190" style="left:1247.50px;top:650.00px;font-size:14px;color:#1c1c1c;transform:scale(1.0518,1);">Feb/01/2025</div>
<div class="t" id="t191" style="left:1412.70px;top:650.00px;font-size:14px;color:#1c1c1c;transform:scale(1.0658,1);">Feb/11/2025</div>
<div class="t" id="t192" style="left:1586.70px;top:650.00px;font-size:14px;color:#1c1c1c;transform:scale(0.9099,1);">sales@a…</div>
<div class="t" id="t193" style="left:1678.20px;top:650.00px;font-size:14px;color:#1c1c1c;letter-spacing:0.099px;">United States America</div>
<svg class="abs" style="left:17.400000000000006px;top:695.885px" width="14" height="10" viewBox="0 0 14 10"><path d="M1.600 2l5.400 5.400 5.400-5.400" fill="none" stroke="#505050" stroke-width="1.700"/></svg>
<div class="abs" style="left:1px;top:679.585px;width:93px;height:41px;overflow:hidden"><div class="go" style="left:51.599999999999994px;top:6.5px"></div></div>
<svg class="abs" style="left:61px;top:693.2850000000001px" width="10" height="13" viewBox="0 0 10 13"><path d="M1.900 .9l5.500 5.400-5.500 5.400" fill="none" stroke="#fff" stroke-width="1.900"/></svg>
<svg class="abs" style="left:109.30px;top:684.69px" width="31" height="31" viewBox="-15.500 -15.500 31 31"><path d="M0 -14.6 L7.3 -7.3 L0 0 L-7.3 -7.3Z" fill="#8c6468"/><path d="M-14.6 0 L-7.3 -7.3 L0 0 L-7.3 7.3Z" fill="#64649e"/><path d="M14.6 0 L7.3 -7.3 L0 0 L7.3 7.3Z" fill="#9a9468"/><path d="M0 14.6 L7.3 7.3 L0 0 L-7.3 7.3Z" fill="#9a9a9a"/><path d="M0 -14.6 L14.6 0 L0 14.6 L-14.6 0Z" fill="none" stroke="#68687a" stroke-width=".7"/></svg>
<svg class="abs" style="left:147.90px;top:683.38px" width="32" height="32" viewBox="-16 -16 32 32"><path d="M-12.500 -1.800 A12.600 12.600 0 0 1 9.300 -8.600" fill="none" stroke="#0a9e58" stroke-width="2.500"/><path d="M12.500 1.800 A12.600 12.600 0 0 1 -9.300 8.600" fill="none" stroke="#0a9e58" stroke-width="2.500"/><path d="M12.900 -12.400 L13.300 -3.600 L4.800 -5.400Z" fill="#0a9e58"/><path d="M-12.900 12.400 L-13.300 3.600 L-4.800 5.400Z" fill="#0a9e58"/><path d="M.3 -8.100v16.400" stroke="#0a9e58" stroke-width="1.500"/><path d="M3.300 -3.200 C3 -5.100 1.800 -5.600 .2 -5.600 C-1.700 -5.600 -2.800 -4.600 -2.800 -3.100 C-2.800 .2 3.500 -.9 3.500 2.700 C3.500 4.500 2.100 5.400 .2 5.400 C-1.900 5.400 -3 4.400 -3.200 2.600" fill="none" stroke="#0a9e58" stroke-width="2.300"/></svg>
<svg class="abs" style="left:187.05px;top:685.19px" width="30" height="30" viewBox="-15 -15 30 30"><circle r="14.150" fill="#708d6e"/><path fill="#a2a2a2" d="M-8.300 -2.800h4.300v9.800h-4.300z"/><path fill="#a2a2a2" d="M-2 -1.450 L-.5 -2.600 L1.500 -6.900 Q2.300 -7.800 3.200 -7 Q3.900 -5 3.600 -2.600 L9.300 -2.300 Q10.400 -1.300 10.100 -.2 Q10.300 1.200 9.700 2.400 Q9.700 3.800 9 4.800 Q8.800 6.300 7.700 7.050 L0 7.050 L-2 6Z"/></svg>
<svg class="abs" style="left:223.95px;top:685.09px" width="30" height="30" viewBox="-15 -15 30 30"><circle r="14.100" fill="#708d6e"/><path fill="#a09ba0" d="M-12.500 1.800 L-10.200 -5.500 L-7.800 -4.700 L-9.200 2.100Z"/><path fill="#a09ba0" d="M7.100 -4.700 L9.500 -5.500 L12 1.100 L9.400 2.100Z"/><path fill="#a09ba0" d="M-7.400 -3.700 L-3.700 -2.500 L-1.800 -4 L1.100 -4.700 L4 -3.500 L7 -3.100 L7.700 .5 L6 2.300 L7.800 3.700 L6 5 L5 6.100 L2.750 7.300 L.2 8.250 L-2.400 8.250 L-4.700 6.600 L-7 4.700 L-7.900 2.400 L-8.700 1.300Z"/><path d="M-4.800 -1.100 L-2.700 -.1 L-.5 -2.100 L1.100 -1.800 L2.800 -.2 L6.800 2.300" fill="none" stroke="#708d6e" stroke-width=".75"/><path d="M-7.300 3l2.300 1.500M-6 5l2.300 1.500M-4.200 6.700l2.200 1.400M-1.900 8l1.700-1.600M3.300 7.400l-1.500-2M5.400 6.200l-1.600-2M7 4.400l-2-1.600" fill="none" stroke="#708d6e" stroke-width=".7"/></svg>
<div class="t" id="t194" style="left:277.70px;top:693.00px;font-size:14px;color:#1c1c1c;transform:scale(0.9819,1);">AHCQ-1124-A</div>
<div class="sw" style="left:452px;top:686.585px"><i style="background:#417505"></i></div>
<div class="abs" style="left:498px;top:688.585px;width:85px;height:26px;overflow:hidden">
<div class="t" id="t195" style="left:1.00px;top:5.41px;font-size:14px;color:#1c1c1c;transform:scale(0.9837,1);">Created</div>
</div>
<div class="t" id="t196" style="left:592.80px;top:692.00px;font-size:14.8px;color:#1c1c1c;letter-spacing:0.033px;">Aviaton Company</div>
<div class="t" id="t197" style="left:715.50px;top:692.00px;font-size:14px;color:#1c1c1c;">6</div>
<div class="t" id="t198" style="left:773.20px;top:692.00px;font-size:14.8px;color:#1c1c1c;letter-spacing:0.033px;">Aviaton Company</div>
<div class="t" id="t199" style="left:903.00px;top:692.00px;font-size:14px;color:#1c1c1c;">1</div>
<div class="t" id="t200" style="left:954.70px;top:693.00px;font-size:14px;color:#1c1c1c;">1</div>
<div class="t" id="t201" style="left:1091.30px;top:693.00px;font-size:14px;color:#1c1c1c;transform:scale(1.0729,1);">Jan/28/2025</div>
<div class="t" id="t202" style="left:1247.50px;top:694.00px;font-size:14px;color:#1c1c1c;transform:scale(1.0518,1);">Feb/01/2025</div>
<div class="t" id="t203" style="left:1411.70px;top:693.00px;font-size:14px;color:#1c1c1c;transform:scale(1.0658,1);">Feb/11/2025</div>
<div class="t" id="t204" style="left:1586.70px;top:694.00px;font-size:14px;color:#1c1c1c;transform:scale(0.9099,1);">sales@a…</div>
<div class="t" id="t205" style="left:1678.20px;top:693.00px;font-size:14px;color:#1c1c1c;letter-spacing:0.099px;">United States America</div>
<svg class="abs" style="left:17.400000000000006px;top:738.93px" width="14" height="10" viewBox="0 0 14 10"><path d="M1.600 2l5.400 5.400 5.400-5.400" fill="none" stroke="#505050" stroke-width="1.700"/></svg>
<div class="abs" style="left:1px;top:722.63px;width:93px;height:41px;overflow:hidden"><div class="go" style="left:51.599999999999994px;top:6.5px"></div></div>
<svg class="abs" style="left:61px;top:736.33px" width="10" height="13" viewBox="0 0 10 13"><path d="M1.900 .9l5.500 5.400-5.500 5.400" fill="none" stroke="#fff" stroke-width="1.900"/></svg>
<svg class="abs" style="left:109.30px;top:727.73px" width="31" height="31" viewBox="-15.500 -15.500 31 31"><path d="M0 -14.6 L7.3 -7.3 L0 0 L-7.3 -7.3Z" fill="#8c6468"/><path d="M-14.6 0 L-7.3 -7.3 L0 0 L-7.3 7.3Z" fill="#64649e"/><path d="M14.6 0 L7.3 -7.3 L0 0 L7.3 7.3Z" fill="#9a9468"/><path d="M0 14.6 L7.3 7.3 L0 0 L-7.3 7.3Z" fill="#9a9a9a"/><path d="M0 -14.6 L14.6 0 L0 14.6 L-14.6 0Z" fill="none" stroke="#68687a" stroke-width=".7"/></svg>
<svg class="abs" style="left:147.90px;top:726.43px" width="32" height="32" viewBox="-16 -16 32 32"><path d="M-12.500 -1.800 A12.600 12.600 0 0 1 9.300 -8.600" fill="none" stroke="#0a9e58" stroke-width="2.500"/><path d="M12.500 1.800 A12.600 12.600 0 0 1 -9.300 8.600" fill="none" stroke="#0a9e58" stroke-width="2.500"/><path d="M12.900 -12.400 L13.300 -3.600 L4.800 -5.400Z" fill="#0a9e58"/><path d="M-12.900 12.400 L-13.300 3.600 L-4.800 5.400Z" fill="#0a9e58"/><path d="M.3 -8.100v16.400" stroke="#0a9e58" stroke-width="1.500"/><path d="M3.300 -3.200 C3 -5.100 1.800 -5.600 .2 -5.600 C-1.700 -5.600 -2.800 -4.600 -2.800 -3.100 C-2.800 .2 3.500 -.9 3.500 2.700 C3.500 4.500 2.100 5.400 .2 5.400 C-1.900 5.400 -3 4.400 -3.200 2.600" fill="none" stroke="#0a9e58" stroke-width="2.300"/></svg>
<svg class="abs" style="left:187.05px;top:728.23px" width="30" height="30" viewBox="-15 -15 30 30"><circle r="14.150" fill="#708d6e"/><path fill="#a2a2a2" d="M-8.300 -2.800h4.300v9.800h-4.300z"/><path fill="#a2a2a2" d="M-2 -1.450 L-.5 -2.600 L1.500 -6.900 Q2.300 -7.800 3.200 -7 Q3.900 -5 3.600 -2.600 L9.300 -2.300 Q10.400 -1.300 10.100 -.2 Q10.300 1.200 9.700 2.400 Q9.700 3.800 9 4.800 Q8.800 6.300 7.700 7.050 L0 7.050 L-2 6Z"/></svg>
<svg class="abs" style="left:223.95px;top:728.13px" width="30" height="30" viewBox="-15 -15 30 30"><circle r="14.100" fill="#708d6e"/><path fill="#a09ba0" d="M-12.500 1.800 L-10.200 -5.500 L-7.800 -4.700 L-9.200 2.100Z"/><path fill="#a09ba0" d="M7.100 -4.700 L9.500 -5.500 L12 1.100 L9.400 2.100Z"/><path fill="#a09ba0" d="M-7.400 -3.700 L-3.700 -2.500 L-1.800 -4 L1.100 -4.700 L4 -3.500 L7 -3.100 L7.700 .5 L6 2.300 L7.800 3.700 L6 5 L5 6.100 L2.750 7.300 L.2 8.250 L-2.400 8.250 L-4.700 6.600 L-7 4.700 L-7.900 2.400 L-8.700 1.300Z"/><path d="M-4.800 -1.100 L-2.700 -.1 L-.5 -2.100 L1.100 -1.800 L2.800 -.2 L6.800 2.300" fill="none" stroke="#708d6e" stroke-width=".75"/><path d="M-7.300 3l2.300 1.500M-6 5l2.300 1.500M-4.200 6.700l2.200 1.400M-1.900 8l1.700-1.600M3.300 7.400l-1.500-2M5.400 6.200l-1.600-2M7 4.400l-2-1.600" fill="none" stroke="#708d6e" stroke-width=".7"/></svg>
<div class="t" id="t206" style="left:277.70px;top:736.00px;font-size:14px;color:#1c1c1c;transform:scale(0.9819,1);">AHCQ-1123-A</div>
<div class="sw" style="left:452px;top:729.63px"><i style="background:#417505"></i></div>
<div class="abs" style="left:498px;top:731.63px;width:85px;height:26px;overflow:hidden">
<div class="t" id="t207" style="left:1.00px;top:5.37px;font-size:14px;color:#1c1c1c;transform:scale(0.9837,1);">Created</div>
</div>
<div class="t" id="t208" style="left:591.80px;top:735.00px;font-size:14.8px;color:#1c1c1c;letter-spacing:0.033px;">Aviaton Company</div>
<div class="t" id="t209" style="left:714.50px;top:735.00px;font-size:14px;color:#1c1c1c;">6</div>
<div class="t" id="t210" style="left:774.20px;top:736.00px;font-size:14.8px;color:#1c1c1c;letter-spacing:0.033px;">Aviaton Company</div>
<div class="t" id="t211" style="left:897.50px;top:736.00px;font-size:14px;color:#1c1c1c;">3</div>
<div class="t" id="t212" style="left:954.70px;top:736.00px;font-size:14px;color:#1c1c1c;">2</div>
<div class="t" id="t213" style="left:1091.30px;top:736.00px;font-size:14px;color:#1c1c1c;transform:scale(1.0729,1);">Jan/27/2025</div>
<div class="t" id="t214" style="left:1246.50px;top:737.00px;font-size:14px;color:#1c1c1c;transform:scale(1.0729,1);">Jan/31/2025</div>
<div class="t" id="t215" style="left:1410.70px;top:737.00px;font-size:14px;color:#1c1c1c;transform:scale(1.0518,1);">Feb/10/2025</div>
<div class="t" id="t216" style="left:1588.20px;top:735.00px;font-size:14px;color:#1c1c1c;transform:scale(0.9099,1);">sales@a…</div>
<div class="t" id="t217" style="left:1678.20px;top:736.00px;font-size:14px;color:#1c1c1c;letter-spacing:0.113px;">United Kingdom</div>
</div>
<div class="t" id="t218" style="left:92.00px;top:1018.00px;font-size:14px;color:#1c1c1c;letter-spacing:-0.078px;">10</div>
<div class="abs" style="left:122px;top:1008.500px;width:32px;height:32px;border-radius:50%;background:#cfd6c7"></div>
<div class="t" id="t219" style="left:129.50px;top:1018.00px;font-size:14px;color:#eef1ea;transform:scale(1.0271,1);">25</div>
<div class="t" id="t220" style="left:168.25px;top:1018.00px;font-size:14px;color:#1c1c1c;letter-spacing:-0.078px;">50</div>
<div class="t" id="t221" style="left:204.50px;top:1018.00px;font-size:14px;color:#1c1c1c;transform:scale(0.9846,1);">100</div>
<div class="t" id="t222" style="left:246.25px;top:1018.00px;font-size:14px;color:#1c1c1c;letter-spacing:-0.055px;">500</div>
<svg class="abs" style="left:1753px;top:1018.500px" width="10" height="13" viewBox="0 0 10 13"><path d="M7.800 1.500l-4.900 4.900 4.900 4.900" fill="none" stroke="#9a9a9a" stroke-width="1.600"/></svg>
<div class="abs" style="left:1780px;top:1008.500px;width:32px;height:32px;border-radius:50%;background:#cfd6c7"></div>
<div class="t" id="t223" style="left:1792.00px;top:1018.00px;font-size:14px;color:#eef1ea;">1</div>
<div class="t" id="t224" style="left:1830.00px;top:1018.00px;font-size:14px;color:#1c1c1c;">2</div>
<svg class="abs" style="left:1866.500px;top:1018.500px" width="10" height="13" viewBox="0 0 10 13"><path d="M2.800 1.500l4.900 4.900-4.900 4.900" fill="none" stroke="#222" stroke-width="1.900"/></svg>
</div></body></html>
